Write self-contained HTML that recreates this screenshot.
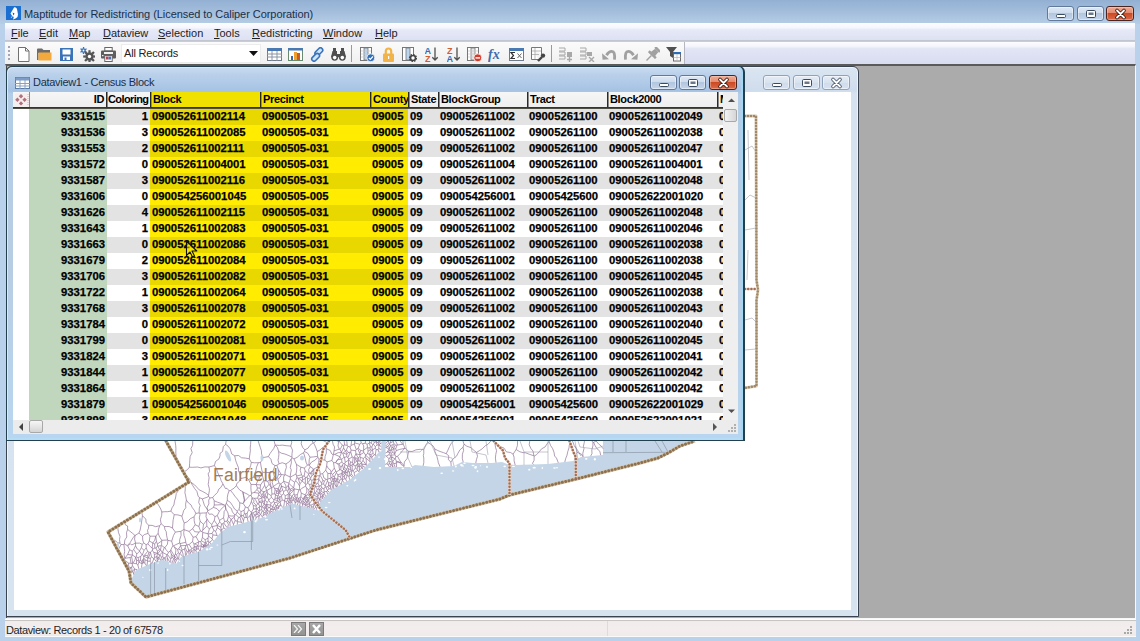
<!DOCTYPE html>
<html><head><meta charset="utf-8">
<style>
*{box-sizing:border-box;margin:0;padding:0}
html,body{width:1140px;height:641px;overflow:hidden}
body{position:relative;background:#b9d1ea;font-family:"Liberation Sans",sans-serif;}
.a{position:absolute}
#title{left:0;top:0;width:1140px;height:24px;background:linear-gradient(#93b0d3,#a5bfdd 55%,#b7cde6)}
#ttext{left:24px;top:8px;font-size:11px;letter-spacing:-0.06px;color:#1b2f4a;white-space:nowrap}
.wb{position:absolute;border:1px solid #61799a;border-radius:3px;background:linear-gradient(#dfe9f6 0%,#cddcee 45%,#b2c6de 50%,#c4d5ea 100%);box-shadow:inset 0 0 0 1px rgba(255,255,255,.45)}
.wb.cl{border-color:#4a2520;background:linear-gradient(#efab95 0%,#e48b70 45%,#cc4a22 50%,#da6a4c 100%);box-shadow:inset 0 0 0 1px rgba(255,220,200,.4)}
.wb.in{border-color:#8ea3bb;background:linear-gradient(#e4ecf6,#d8e3f0 50%,#cfdcec 51%,#d6e2f0);box-shadow:inset 0 0 0 1px rgba(255,255,255,.5)}
.wb svg{position:absolute;left:0;top:0}
#menubar{left:5px;top:23px;width:1130px;height:18px;background:linear-gradient(#fdfdff 0%,#f6f7fd 28%,#e6e9f7 40%,#dde1f3 100%);border-bottom:1px solid #c2c6d0}
.mi{position:absolute;top:27px;font-size:11px;color:#1e1e1e;white-space:nowrap}
#tbrow{left:5px;top:41px;width:1130px;height:24px;background:linear-gradient(#c9ccd6 0,#c9ccd6 1px,#fdfdff 1px,#f4f5fc 22%,#e2e5f5 32%,#d8dcf0 100%)}
#tb{left:5px;top:42px;width:680px;height:22px;background:linear-gradient(#fbfbfb,#f0f0f0);border-right:1px solid #b4b6c2}
#mdi{left:5px;top:64px;width:1131px;height:555px;background:#ababab;border-top:2px solid #5a5a5a;border-left:1px solid #b9d1ea;box-shadow:inset 1px 0 0 #4a4a4a;border-right:1px solid #f8f8f8;border-bottom:1px solid #f8f8f8}
#status{left:5px;top:619px;width:1131px;height:18px;background:linear-gradient(#c8c4c4 0,#c8c4c4 1px,#f1ecec 1px,#f3eded 50%,#f0ebeb 94%,#fafafa 94%);border-top:1px solid #fdfdfd}
.win{position:absolute;border:1px solid #3c4c5c;border-radius:6px 6px 0 0}
.r{position:absolute;left:0;height:16px;width:760px}
.c{position:absolute;top:0;height:16px;font-weight:bold;font-size:11.3px;line-height:14px;padding-left:2px;-webkit-text-stroke:0.25px #000;white-space:nowrap;overflow:hidden;color:#000}
.c.rt{text-align:right;padding-left:0;padding-right:2px}
.h{position:absolute;top:0;height:15px;font-weight:bold;font-size:11px;line-height:15px;padding-left:2px;white-space:nowrap;overflow:hidden;color:#000;letter-spacing:-0.35px;border-left:1px solid #2a2a2a;box-shadow:inset 1px 0 0 #8a8a8a}
.h.rt{text-align:right;padding-right:2px}
</style></head>
<body>
<div id="title" class="a"></div>
<svg class="a" style="left:6px;top:6px" width="15" height="14" viewBox="0 0 15 14"><rect x="-0.5" y="-0.5" width="16" height="15" fill="#8ec4f4"/><rect width="15" height="14" fill="#1a6fd0"/><path d="M8 1.5c1.5-.5 3 .5 3.2 2.5l.8 4.5-.5 2.5-2 1.5-2.5 1 .8-2.5-2-1.5L4.5 7.5 6 5z" fill="#fff"/><path d="M6.5 6.5l2 1-1 2z" fill="#1a4f9a"/><path d="M5 12l1.5-2" stroke="#9fd0ff" stroke-width="1"/></svg>
<div id="ttext" class="a">Maptitude for Redistricting (Licensed to Caliper Corporation)</div>
<div class="wb" style="left:1047px;top:6px;width:27px;height:15px"><svg width="27" height="15"><rect x="8.5" y="7.5" width="9" height="3" rx="1" fill="#fff" stroke="#3a4a5e"/></svg></div>
<div class="wb" style="left:1077px;top:6px;width:27px;height:15px"><svg width="27" height="15"><rect x="8.5" y="3.5" width="9" height="7" rx="1.2" fill="#fff" stroke="#3a4a5e"/><rect x="10.5" y="5.5" width="5" height="2.5" fill="#6a7788"/></svg></div>
<div class="wb cl" style="left:1106px;top:6px;width:28px;height:15px"><svg width="28" height="15"><path d="M10 3.5l7 7M17 3.5l-7 7" stroke="#3a1810" stroke-width="3.6" stroke-linecap="round"/><path d="M10 3.5l7 7M17 3.5l-7 7" stroke="#fff" stroke-width="1.8" stroke-linecap="round"/></svg></div>

<div id="menubar" class="a"></div>
<div class="mi" style="left:11px"><u>F</u>ile</div>
<div class="mi" style="left:39px"><u>E</u>dit</div>
<div class="mi" style="left:69px"><u>M</u>ap</div>
<div class="mi" style="left:103px"><u>D</u>ataview</div>
<div class="mi" style="left:158px"><u>S</u>election</div>
<div class="mi" style="left:214px"><u>T</u>ools</div>
<div class="mi" style="left:252px"><u>R</u>edistricting</div>
<div class="mi" style="left:323px"><u>W</u>indow</div>
<div class="mi" style="left:375px"><u>H</u>elp</div>

<div id="tbrow" class="a"></div>
<div id="tb" class="a"></div>
<div class="a" style="left:121px;top:44px;width:140px;height:19px;background:#fff;border:1px solid #ececec"></div>
<div class="a" style="left:124px;top:47px;font-size:11px;letter-spacing:-0.2px;color:#222;white-space:nowrap">All Records</div>
<svg class="a" style="left:249px;top:51px" width="9" height="5"><path d="M0 0h9L4.5 5z" fill="#111"/></svg>
<!-- toolbar grip -->
<svg class="a" style="left:7px;top:45px" width="4" height="18"><g fill="#a0a8b8"><rect x="1" y="1" width="2" height="2"/><rect x="1" y="5" width="2" height="2"/><rect x="1" y="9" width="2" height="2"/><rect x="1" y="13" width="2" height="2"/></g></svg>
<!-- new -->
<svg class="a" style="left:17px;top:47px" width="13" height="15" viewBox="0 0 13 15"><path d="M1.5 0.5h7l3.5 3.5v10.5h-10.5z" fill="#fff" stroke="#707070"/><path d="M8.5 0.5v3.5h3.5" fill="none" stroke="#707070"/></svg>
<!-- open -->
<svg class="a" style="left:37px;top:48px" width="15" height="13" viewBox="0 0 15 13"><path d="M0 1.5Q0 0.5 1 0.5h4l1.5 1.5H13v3H1.5v7H0z" fill="#6b6b6b"/><rect x="1.5" y="4.5" width="13" height="8" fill="#f3a93c"/></svg>
<!-- save -->
<svg class="a" style="left:60px;top:48px" width="13" height="13" viewBox="0 0 13 13"><rect x="0.75" y="0.75" width="11.5" height="11.5" fill="#3b73b9" stroke="#3b73b9" stroke-width="1.5"/><rect x="2.5" y="1.5" width="8" height="5" fill="#fff"/><rect x="3" y="8.5" width="7" height="3.5" fill="#fff"/><rect x="4.5" y="9.5" width="2" height="2.5" fill="#3b73b9"/></svg>
<!-- gears -->
<svg class="a" style="left:80px;top:47px" width="15" height="15" viewBox="0 0 15 15"><g fill="#3b73b9"><rect x="2.9" y="0" width="1.3" height="1.8" transform="rotate(0 3.5 3.5)"/><rect x="2.9" y="0" width="1.3" height="1.8" transform="rotate(60 3.5 3.5)"/><rect x="2.9" y="0" width="1.3" height="1.8" transform="rotate(120 3.5 3.5)"/><rect x="2.9" y="0" width="1.3" height="1.8" transform="rotate(180 3.5 3.5)"/><rect x="2.9" y="0" width="1.3" height="1.8" transform="rotate(240 3.5 3.5)"/><rect x="2.9" y="0" width="1.3" height="1.8" transform="rotate(300 3.5 3.5)"/><circle cx="3.5" cy="3.5" r="2.2"/></g><circle cx="3.5" cy="3.5" r="0.9" fill="#fff"/><g fill="#555"><rect x="8.4" y="3.2" width="2.2" height="2.6" transform="rotate(0 9.5 9.5)"/><rect x="8.4" y="3.2" width="2.2" height="2.6" transform="rotate(45 9.5 9.5)"/><rect x="8.4" y="3.2" width="2.2" height="2.6" transform="rotate(90 9.5 9.5)"/><rect x="8.4" y="3.2" width="2.2" height="2.6" transform="rotate(135 9.5 9.5)"/><rect x="8.4" y="3.2" width="2.2" height="2.6" transform="rotate(180 9.5 9.5)"/><rect x="8.4" y="3.2" width="2.2" height="2.6" transform="rotate(225 9.5 9.5)"/><rect x="8.4" y="3.2" width="2.2" height="2.6" transform="rotate(270 9.5 9.5)"/><rect x="8.4" y="3.2" width="2.2" height="2.6" transform="rotate(315 9.5 9.5)"/><circle cx="9.5" cy="9.5" r="4.2"/></g><circle cx="9.5" cy="9.5" r="1.7" fill="#fff"/></svg>
<!-- print -->
<svg class="a" style="left:101px;top:47px" width="15" height="15" viewBox="0 0 15 15"><rect x="3.8" y="0.5" width="7.4" height="3.5" fill="#fff" stroke="#666"/><rect x="0" y="3.5" width="15" height="8" rx="1" fill="#5e5e5e"/><rect x="3" y="5" width="9" height="2" fill="#f2f2f2"/><rect x="3.8" y="8.5" width="7.4" height="6" fill="#fff" stroke="#666"/><rect x="5" y="9.5" width="2.5" height="3" fill="#c04050"/><rect x="7.5" y="9.5" width="2.5" height="3" fill="#4a70b0"/><rect x="1" y="8" width="1.5" height="1.2" fill="#dfe"/></svg>
<!-- separator after combobox region -->
<!-- table -->
<svg class="a" style="left:267px;top:48px" width="15" height="13" viewBox="0 0 15 13"><rect x="0.5" y="0.5" width="14" height="12" fill="#fff" stroke="#6f7b88"/><rect x="0" y="0" width="15" height="3" fill="#4a78b0"/><path d="M0 6h15M0 9h15M5 3v10M10 3v10" stroke="#8a96a2"/></svg>
<!-- chart -->
<svg class="a" style="left:288px;top:48px" width="15" height="13" viewBox="0 0 15 13"><rect x="0.5" y="0.5" width="14" height="12" fill="#fff" stroke="#6a8a70"/><rect x="0" y="0" width="15" height="2.5" fill="#4a78b0"/><rect x="3" y="8" width="2" height="4" fill="#3a68a8"/><rect x="6" y="4" width="3" height="8" fill="#f0a030"/><rect x="9" y="5" width="3" height="7" fill="#d05a20"/></svg>
<!-- link -->
<svg class="a" style="left:310px;top:47px" width="15" height="15" viewBox="0 0 15 15"><g fill="#cfe6fa" stroke="#3b73b9" stroke-width="1.6"><rect x="6.6" y="0.2" width="4.5" height="9" rx="2.2" transform="rotate(45 8.8 4.7)"/><rect x="3.4" y="5.8" width="4.5" height="9" rx="2.2" transform="rotate(45 5.6 10.3)"/></g></svg>
<!-- binoculars -->
<svg class="a" style="left:331px;top:48px" width="15" height="13" viewBox="0 0 15 13"><g fill="#4f4f4f"><rect x="2" y="0" width="3" height="4"/><rect x="10" y="0" width="3" height="4"/><path d="M1.5 3h4.5v3h3V3h4.5L15 9H0z"/><circle cx="3.7" cy="9.3" r="3.4"/><circle cx="11.3" cy="9.3" r="3.4"/></g><circle cx="3.7" cy="9.6" r="1.8" fill="#fff"/><circle cx="11.3" cy="9.6" r="1.8" fill="#fff"/></svg>
<div class="a" style="left:351px;top:45px;width:1px;height:17px;background:#9a9a9a"></div>
<!-- col-check -->
<svg class="a" style="left:360px;top:47px" width="15" height="15" viewBox="0 0 15 15"><rect x="0.5" y="0.5" width="11" height="13" fill="#fff" stroke="#777"/><rect x="4" y="1" width="4" height="12" fill="#bcd6f2" stroke="#777" stroke-width="0.8"/><path d="M1 4h10M1 7h10M1 10h10" stroke="#c8c8c8" stroke-width="0.7"/><circle cx="10.8" cy="10.8" r="4" fill="#2f6db5" stroke="#fff" stroke-width="0.8"/><path d="M8.8 10.8l1.5 1.5 2.6-2.8" fill="none" stroke="#fff" stroke-width="1.2"/></svg>
<!-- lock -->
<svg class="a" style="left:383px;top:47px" width="11" height="15" viewBox="0 0 11 15"><path d="M2.8 7V4.2a2.7 2.7 0 0 1 5.4 0V7" fill="none" stroke="#f2b447" stroke-width="2.2"/><rect x="0" y="6.5" width="11" height="8.5" rx="1" fill="#f2b447"/><rect x="5" y="9" width="1.2" height="3" fill="#fff"/></svg>
<!-- col-gear -->
<svg class="a" style="left:402px;top:47px" width="15" height="15" viewBox="0 0 15 15"><rect x="0.5" y="0.5" width="11" height="13" fill="#fff" stroke="#777"/><rect x="4" y="1" width="4" height="12" fill="#bcd6f2" stroke="#777" stroke-width="0.8"/><circle cx="11" cy="11" r="2.5" fill="#fff" stroke="#444" stroke-width="1.6"/><circle cx="11" cy="11" r="3.5" fill="none" stroke="#444" stroke-width="1.2" stroke-dasharray="1.5 1.2"/></svg>
<!-- sort a-z -->
<svg class="a" style="left:425px;top:46px" width="13" height="16" viewBox="0 0 13 16"><text x="-0.5" y="7.5" font-family="Liberation Sans" font-weight="bold" font-size="9" fill="#2f6db5">A</text><text x="0" y="15.5" font-family="Liberation Sans" font-weight="bold" font-size="9" fill="#d0602a">Z</text><path d="M10 1.5v12.5M7.3 11.3L10 14l2.7-2.7" fill="none" stroke="#505050" stroke-width="1.3"/></svg>
<!-- sort z-a -->
<svg class="a" style="left:447px;top:46px" width="13" height="16" viewBox="0 0 13 16"><text x="0" y="7.5" font-family="Liberation Sans" font-weight="bold" font-size="9" fill="#d0602a">Z</text><text x="-0.5" y="15.5" font-family="Liberation Sans" font-weight="bold" font-size="9" fill="#2f6db5">A</text><path d="M10 1.5v12.5M7.3 11.3L10 14l2.7-2.7" fill="none" stroke="#505050" stroke-width="1.3"/></svg>
<!-- col-minus -->
<svg class="a" style="left:467px;top:47px" width="15" height="15" viewBox="0 0 15 15"><rect x="0.5" y="0.5" width="11" height="13" fill="#fff" stroke="#777"/><rect x="4" y="1" width="4" height="12" fill="#e6e6e6" stroke="#777" stroke-width="0.8"/><path d="M1 4h10M1 7h10M1 10h10" stroke="#c8c8c8" stroke-width="0.7"/><circle cx="10.8" cy="10.8" r="4" fill="#d23a2a" stroke="#fff" stroke-width="0.8"/><rect x="8.5" y="10.2" width="4.6" height="1.4" fill="#fff"/></svg>
<!-- fx -->
<svg class="a" style="left:488px;top:46px" width="14" height="16" viewBox="0 0 14 16"><text x="0" y="12.5" font-family="Liberation Serif" font-style="italic" font-weight="bold" font-size="14" fill="#3a6fb2">fx</text></svg>
<!-- sigma window -->
<svg class="a" style="left:509px;top:48px" width="15" height="13" viewBox="0 0 15 13"><rect x="0.5" y="0.5" width="14" height="12" fill="#fff" stroke="#6f7b88"/><rect x="0" y="0" width="15" height="3" fill="#4a78b0"/><path d="M6 4.5H2l2.5 3L2 10.5h4" fill="none" stroke="#333" stroke-width="1.2"/><path d="M8.5 5.5l4 4.5M12.5 5.5l-4 4.5" stroke="#666" stroke-width="1"/></svg>
<!-- edit wrench -->
<svg class="a" style="left:531px;top:47px" width="15" height="15" viewBox="0 0 15 15"><path d="M0.5 0.5h10v7M0.5 0.5v12h7" fill="#fff" stroke="#777"/><path d="M1 4h9M1 7.5h7M4 1v11" stroke="#aaa" stroke-width="0.8"/><path d="M7 14l4-4" stroke="#444" stroke-width="2.4"/><circle cx="12" cy="8.6" r="2.2" fill="#444"/></svg>
<div class="a" style="left:551px;top:45px;width:1px;height:17px;background:#9a9a9a"></div>
<!-- disabled icons -->
<svg class="a" style="left:559px;top:47px" width="15" height="15" viewBox="0 0 15 15"><path d="M0 1h6v3H0M0 5h6v3H0M0 9h6v3H0" fill="none" stroke="#a8a8a8" stroke-width="1"/><rect x="8" y="5" width="5" height="5" fill="#a8a8a8"/><path d="M10.5 10v5M8 12.5h5" stroke="#a8a8a8" stroke-width="1.4"/></svg>
<svg class="a" style="left:580px;top:47px" width="15" height="15" viewBox="0 0 15 15"><path d="M0 1h6v3H0M0 5h6v3H0M0 9h6v3H0" fill="none" stroke="#a8a8a8" stroke-width="1"/><rect x="7" y="5" width="5" height="4" fill="#a8a8a8"/><path d="M9 10l5 5M14 10l-5 5" stroke="#a8a8a8" stroke-width="1.4"/></svg>
<svg class="a" style="left:602px;top:50px" width="15" height="10" viewBox="0 0 15 10"><path d="M4.5 5.2C6 2.5 8 1.4 9.8 1.4 12 1.4 13 3.5 12.5 9.6" fill="none" stroke="#a0a0a0" stroke-width="2.8"/><path d="M0 3.2L0.6 9.8 7 9.2z" fill="#a0a0a0"/></svg>
<svg class="a" style="left:623px;top:50px" width="15" height="10" viewBox="0 0 15 10"><g transform="translate(15 0) scale(-1 1)"><path d="M4.5 5.2C6 2.5 8 1.4 9.8 1.4 12 1.4 13 3.5 12.5 9.6" fill="none" stroke="#a0a0a0" stroke-width="2.8"/><path d="M0 3.2L0.6 9.8 7 9.2z" fill="#a0a0a0"/></g></svg>
<svg class="a" style="left:645px;top:47px" width="15" height="15" viewBox="0 0 15 15"><g transform="rotate(45 7.5 7.5)" fill="#a0a0a0"><rect x="4" y="-1" width="7" height="2.5" rx="0.5"/><path d="M5.2 1.5h4.6l0.6 5.5H4.6z"/><rect x="2.5" y="6.5" width="10" height="2.5" rx="0.5"/><rect x="6.8" y="9" width="1.4" height="7"/></g></svg>
<svg class="a" style="left:666px;top:47px" width="15" height="15" viewBox="0 0 15 15"><path d="M0 0h11L7 5v6L4 9V5z" fill="#505050"/><rect x="7.5" y="5.5" width="7" height="8.5" fill="#fff" stroke="#6a6a6a"/><rect x="7" y="5" width="8" height="2.2" fill="#2f6db5"/><path d="M7.5 10.5h7M11 7v7" stroke="#b8b8b8" stroke-width="0.7"/></svg>


<div id="mdi" class="a"></div>

<!-- Map window -->
<div class="win" style="left:6px;top:66px;width:853px;height:551px;border-color:#3a4450;background:linear-gradient(#dbe6f2,#cfdcec 24px,#d6e2f0 26px,#d8e3f0);box-shadow:inset 1px 1px 0 #eef4fa,inset -1px 0 0 #eef4fa"></div>
<div class="wb in" style="left:763px;top:75px;width:27px;height:15px"><svg width="27" height="15"><rect x="8.5" y="7.5" width="9" height="3" rx="1" fill="#fff" stroke="#3a4a5e"/></svg></div>
<div class="wb in" style="left:793px;top:75px;width:27px;height:15px"><svg width="27" height="15"><rect x="8.5" y="3.5" width="9" height="7" rx="1.2" fill="#fff" stroke="#3a4a5e"/><rect x="10.5" y="5.5" width="5" height="2.5" fill="#6a7788"/></svg></div>
<div class="wb in" style="left:822px;top:75px;width:28px;height:15px"><svg width="28" height="15"><path d="M10 3.5l7 7M17 3.5l-7 7" stroke="#4a5a6e" stroke-width="3.6" stroke-linecap="round"/><path d="M10 3.5l7 7M17 3.5l-7 7" stroke="#fff" stroke-width="1.8" stroke-linecap="round"/></svg></div>
<div class="a" style="left:14px;top:92px;width:837px;height:518px;background:#fff;overflow:hidden">
<svg width="837" height="518" viewBox="14 92 837 518" style="position:absolute;left:0;top:0">
<path d="M603.0 436.0 L603.0 455.0 L581.0 457.0 L573.0 461.0 L548.0 464.0 L515.0 465.0 L507.0 464.0 L502.0 462.0 L492.0 463.0 L473.0 463.0 L462.0 462.0 L454.0 466.0 L434.0 467.0 L415.0 465.0 L411.0 467.0 L400.0 467.0 L385.0 467.0 L386.0 436.0 L382.0 436.0 L381.0 449.6 L373.0 459.0 L363.0 469.0 L350.0 479.5 L331.0 490.0 L319.0 503.6 L319.0 510.4 L300.0 505.6 L292.0 503.6 L282.0 507.5 L271.0 513.0 L261.0 518.0 L251.0 521.0 L228.0 527.0 L220.0 533.0 L212.0 543.0 L200.0 551.0 L181.0 557.0 L176.0 564.0 L162.0 560.0 L150.0 564.0 L136.0 570.0 L131.0 580.0 L130.5 580.0 L131.0 583.0 L146.0 597.0 L290.0 558.0 L376.0 530.0 L500.0 499.0 L509.5 495.0 L576.0 479.0 L640.0 463.0 L658.0 458.0 L668.0 453.0 L680.0 446.0 L695.0 441.0 L697.3 436.0 L603.0 436.0Z" fill="#c4d5e7"/>
<g fill="#fff"><ellipse cx="207.1" cy="549.4" rx="1.3" ry="1.1"/><ellipse cx="369.5" cy="469.0" rx="1.4" ry="0.9"/><ellipse cx="182.7" cy="565.5" rx="1.2" ry="0.8"/><ellipse cx="542.3" cy="467.9" rx="0.6" ry="1.2"/><ellipse cx="464.5" cy="463.2" rx="1.3" ry="0.8"/><ellipse cx="158.1" cy="563.0" rx="1.0" ry="0.6"/><ellipse cx="554.5" cy="468.0" rx="1.4" ry="0.7"/><ellipse cx="167.6" cy="569.9" rx="0.8" ry="1.1"/><ellipse cx="179.5" cy="561.2" rx="0.7" ry="0.8"/><ellipse cx="169.9" cy="563.6" rx="0.8" ry="1.1"/><ellipse cx="329.3" cy="502.6" rx="1.3" ry="0.7"/><ellipse cx="475.9" cy="466.8" rx="1.1" ry="0.8"/><ellipse cx="487.0" cy="466.9" rx="0.9" ry="1.1"/><ellipse cx="347.3" cy="485.7" rx="1.0" ry="0.7"/><ellipse cx="461.4" cy="465.0" rx="1.4" ry="1.1"/><ellipse cx="217.4" cy="545.0" rx="1.0" ry="0.5"/><ellipse cx="265.4" cy="516.6" rx="1.0" ry="1.2"/><ellipse cx="462.5" cy="465.9" rx="1.6" ry="0.6"/><ellipse cx="473.0" cy="465.5" rx="1.5" ry="0.7"/><ellipse cx="534.2" cy="467.7" rx="1.6" ry="0.9"/><ellipse cx="504.7" cy="466.3" rx="1.3" ry="0.9"/><ellipse cx="379.0" cy="457.1" rx="0.8" ry="0.9"/><ellipse cx="281.8" cy="509.0" rx="1.0" ry="0.7"/><ellipse cx="411.2" cy="467.1" rx="0.9" ry="0.9"/><ellipse cx="380.4" cy="450.7" rx="1.2" ry="0.8"/><ellipse cx="513.5" cy="466.4" rx="1.5" ry="0.7"/><ellipse cx="480.5" cy="465.7" rx="0.7" ry="0.5"/><ellipse cx="209.9" cy="549.0" rx="1.2" ry="0.8"/><ellipse cx="322.1" cy="511.0" rx="1.4" ry="1.1"/><ellipse cx="477.5" cy="471.2" rx="0.8" ry="1.0"/><ellipse cx="313.8" cy="514.3" rx="0.7" ry="0.5"/><ellipse cx="294.6" cy="508.4" rx="0.9" ry="0.9"/><ellipse cx="586.2" cy="458.9" rx="1.3" ry="0.8"/><ellipse cx="594.9" cy="459.3" rx="1.0" ry="1.2"/><ellipse cx="150.2" cy="570.1" rx="1.3" ry="1.1"/><ellipse cx="385.0" cy="459.1" rx="0.9" ry="1.2"/><ellipse cx="453.1" cy="470.9" rx="1.2" ry="0.7"/><ellipse cx="475.5" cy="467.5" rx="1.3" ry="1.2"/><ellipse cx="455.9" cy="466.5" rx="0.9" ry="1.1"/><ellipse cx="278.9" cy="509.7" rx="1.1" ry="0.7"/><ellipse cx="244.5" cy="532.2" rx="1.3" ry="1.1"/><ellipse cx="211.4" cy="547.5" rx="1.4" ry="0.7"/><ellipse cx="355.5" cy="479.9" rx="0.8" ry="1.1"/><ellipse cx="397.8" cy="470.1" rx="0.8" ry="1.1"/><ellipse cx="266.5" cy="519.7" rx="1.6" ry="0.8"/><ellipse cx="255.6" cy="521.3" rx="1.1" ry="1.1"/><ellipse cx="557.0" cy="467.7" rx="0.9" ry="0.8"/><ellipse cx="441.7" cy="473.3" rx="1.4" ry="0.7"/><ellipse cx="326.1" cy="507.5" rx="1.4" ry="0.8"/><ellipse cx="402.8" cy="468.3" rx="1.3" ry="0.9"/><ellipse cx="256.6" cy="519.8" rx="1.2" ry="0.9"/><ellipse cx="380.0" cy="468.1" rx="1.3" ry="1.1"/><ellipse cx="354.4" cy="480.7" rx="0.6" ry="1.0"/><ellipse cx="529.3" cy="469.7" rx="1.1" ry="0.9"/><ellipse cx="142.9" cy="577.2" rx="0.7" ry="0.5"/></g>
<path d="M150.6 563.0 L150.6 595.0M154.5 562.0 L154.5 594.0M165.7 568.0 L165.7 591.0M184.0 556.0 L184.0 584.0M198.6 551.7 L198.6 581.0M198.6 565.5 L221.8 565.5 L221.8 529.5M221.8 545.0 L230.4 541.5 L252.7 541.5 L252.7 514.0M251.4 521.0 L251.4 550.0M613.0 441.0 L613.0 452.0M626.0 441.0 L626.0 452.0M655.0 441.0 L662.0 452.0M662.0 441.0 L668.0 452.0M603.0 452.7 L668.0 452.3M575.0 446.0 L581.0 456.0M300.0 505.6 L300.0 520.0M290.0 505.0 L292.0 518.0" fill="none" stroke="#8c98a8" stroke-width="0.7"/>
<path d="M558.3 462.8 556.5 458.1 554.6 456.0 554.0 452.3 552.7 448.7 550.7 445.7 549.0 441.5M533.4 464.4 532.5 463.3 534.1 460.3 534.1 456.2M534.1 456.2 536.7 454.6 539.4 451.6 541.6 448.8 545.0 447.0 547.6 443.1 549.0 441.5M450.9 462.1 451.2 466.1M450.9 462.1 448.3 459.6 448.8 455.8 446.2 453.7M440.0 466.7 438.3 462.6 437.9 460.3 436.9 456.3 434.9 451.4 434.8 449.0M446.2 453.7 443.6 452.7 440.1 451.5 437.8 450.5 434.8 449.0M464.0 444.2 466.8 446.2 471.4 447.8 473.3 450.0 476.6 452.4M464.0 444.2 463.1 447.2M463.1 447.2 463.6 450.4 462.4 454.2 462.3 458.5 463.2 462.1M476.6 452.4 477.5 456.3 476.4 459.7 475.8 463.0M459.7 430.4 457.6 432.8 455.3 437.6 453.1 441.4 451.3 443.4 449.6 446.3 447.9 450.2 446.2 453.7M459.7 430.4 460.6 434.1 462.0 438.1 462.7 440.2 464.0 444.2M450.9 462.1 452.9 459.1 456.5 456.2 458.0 453.2 459.9 449.9 463.1 447.2M515.2 465.0 514.1 460.8 514.1 457.3 513.1 454.2M496.0 462.6 495.4 458.1 495.8 454.3 496.6 450.6 495.6 447.7 494.9 443.5M513.1 454.2 510.6 452.5 506.4 451.9 504.1 448.2 501.7 447.1 497.5 445.7 494.9 443.5M476.6 452.4 479.5 450.6 482.3 448.7 485.4 445.7 487.9 444.4 490.7 441.2 493.5 439.4M494.9 443.5 493.5 439.4M459.7 430.0 459.7 430.4M462.5 430.0 466.0 431.3 469.7 431.2 472.2 432.8 476.8 434.1 480.7 435.9 483.7 436.1 486.6 436.5 490.3 437.3 493.6 438.9M493.5 439.4 493.6 438.9M434.8 449.0 433.0 445.8 430.8 444.4 427.7 442.3M428.5 430.0 427.9 433.2 428.2 436.2 427.1 437.6 427.7 442.3M423.1 465.9 423.8 462.7 423.8 458.0 423.3 455.6 423.8 453.5 423.8 449.7M427.7 442.3 425.7 445.1 425.4 446.0 423.8 449.7M184.2 471.9 183.1 471.5M184.2 471.9 184.3 472.4M161.8 512.0 164.8 511.7 167.7 511.7 170.9 511.1M161.8 512.0 160.8 509.1 159.0 505.9 156.5 502.0M184.3 472.4 184.2 473.5M179.5 487.9 178.2 490.8 176.3 493.4 175.5 498.0 174.5 501.1 173.9 505.0 172.0 507.8 170.9 511.1M574.6 460.2 574.6 458.3 576.3 453.5 577.2 452.4M564.8 462.0 565.7 458.5 567.0 455.2 567.8 451.5 569.0 447.8 569.3 445.2 570.1 442.3 571.2 438.4M571.2 438.4 572.9 442.0 574.3 445.7 576.1 448.4 577.2 452.4M549.0 441.5 550.0 437.5 550.7 433.9 551.9 430.0M571.2 438.4 571.3 434.8 571.2 433.4 571.5 430.0M533.9 455.8 533.0 451.0 531.0 448.7 529.2 444.8 529.7 441.3 526.9 437.6 525.1 433.6 524.9 430.0M533.9 455.8 529.1 454.2 525.6 452.8 523.0 452.6 519.9 451.8 516.1 449.5M516.1 449.5 517.4 445.6 517.6 441.1 517.7 437.5 517.7 434.5 518.8 430.0M534.1 456.2 533.9 455.8M513.1 454.2 516.1 449.5M495.3 430.0 494.4 433.2 494.0 436.5 493.6 438.9M175.9 458.6 176.0 454.1 175.8 453.0 175.9 448.5 175.7 445.2 174.9 440.3 174.9 436.3 174.5 434.3 174.9 430.0M123.9 544.5 121.0 544.6M123.9 544.5 124.4 544.1M124.4 544.1 124.8 540.0 126.8 537.0 126.5 532.6 127.6 529.4M121.0 544.6 120.0 543.2M120.0 543.2 119.5 539.7 120.0 536.4 118.5 532.6 117.9 528.8 118.3 525.6M127.6 529.4 127.6 526.0 125.4 524.8 124.7 521.7M117.9 550.3 119.6 547.3 121.0 544.6M123.3 560.5 124.1 559.9M124.1 559.9 124.7 558.5M124.7 558.5 124.1 554.5 124.7 551.4 124.3 548.4 123.9 544.5M112.1 539.7 113.9 539.8 117.6 542.6 120.0 543.2M130.4 579.5 131.0 577.2 130.7 573.7 132.2 571.2M133.7 574.7 133.6 573.6M132.2 571.2 133.6 573.6M401.6 462.9 396.3 461.2M401.6 462.9 404.0 465.5M403.9 466.1 404.0 465.5M403.9 466.1 401.1 464.5 399.2 462.0 396.4 462.3M396.4 462.3 396.3 461.2M408.6 451.3 412.1 451.5 416.0 449.8 420.2 449.3 423.8 449.7M408.6 451.3 408.0 454.4 407.1 458.6 404.4 461.9 404.0 465.5M403.9 467.0 403.9 466.1M185.0 484.5 185.3 488.7 184.9 492.8 185.5 495.1 186.4 500.1M170.9 511.1 174.2 514.7M174.2 514.7 177.9 514.9 181.9 516.1M181.9 516.1 182.8 513.8 183.6 510.7 185.8 507.7 185.6 504.1 186.4 500.1M590.7 456.1 592.0 453.4 591.8 450.0 592.9 445.9 592.9 442.3M583.1 456.8 583.0 456.7M583.0 456.7 582.8 453.4 584.0 448.5 583.4 446.3 584.3 442.4 584.6 437.4 585.1 434.5M592.9 442.3 589.9 438.3 588.0 436.3 585.1 434.5M577.2 452.4 581.4 454.1 583.0 456.7M582.5 430.0 585.1 434.5M161.1 523.7 164.4 526.5M161.8 512.0 161.7 515.3 160.4 519.7 161.1 523.7M174.2 514.7 173.3 519.4 173.1 519.9 172.8 524.2 172.4 528.0M164.4 526.5 166.7 526.5 169.1 526.5 172.4 528.0M127.6 529.4 130.1 531.4 132.4 533.2 134.9 535.4M124.4 544.1 127.3 545.5M127.3 545.5 130.2 542.5 130.8 541.4 133.2 537.6 134.9 535.4M129.7 549.8 127.6 554.5M129.7 549.8 127.7 545.9M124.7 558.5 124.9 558.3M127.3 545.5 127.7 545.9M124.9 558.3 127.6 554.5M132.2 551.0 129.7 549.8M132.4 555.0 132.4 555.1M132.2 551.0 132.4 555.0M127.6 554.5 132.4 555.1M396.4 463.2 393.7 463.6M396.4 463.2 396.5 467.0M395.1 467.0 393.7 463.6M396.4 462.3 396.4 463.2M593.6 442.3 596.2 441.0M593.6 442.3 594.9 445.3 597.0 448.7 599.8 451.2 600.7 455.2M596.2 441.0 598.5 443.9 601.1 445.9 603.0 448.7M592.9 442.3 593.6 442.3M596.2 441.0 597.4 440.0M597.4 440.0 603.0 440.5M189.4 467.2 192.8 467.3 197.6 467.0 200.9 467.9 204.9 466.9 208.9 467.0M184.2 471.9 187.6 469.5 189.4 467.2M184.3 472.4 186.4 475.5 189.5 478.9 190.7 482.1M190.7 482.1 194.5 484.8 196.7 487.1 199.2 489.9 202.1 491.2 206.1 493.4 208.5 495.4M208.9 467.0 209.6 471.4 208.1 473.9 209.1 477.7 208.6 481.4 208.2 484.4 209.3 488.5 209.4 490.5 208.5 495.4M208.9 467.0 214.4 465.6M225.6 444.3 223.3 446.6 222.6 451.4 220.0 453.4 220.0 455.8 219.0 458.8 215.5 461.5 214.4 465.6M225.6 444.3 226.3 439.7 226.3 437.2 226.3 433.3 227.0 430.0M189.4 467.2 189.6 463.7 189.9 459.2 190.1 456.6 192.2 452.6 190.9 448.6 192.6 445.4 192.8 440.7 194.6 437.4 193.4 434.0 194.3 430.0M124.9 558.3 130.1 557.5M132.4 555.1 131.6 556.8M130.1 557.5 131.6 556.8M128.6 563.1 131.0 563.3M124.1 559.9 128.6 563.1M130.1 557.5 131.0 563.3M135.6 557.2 135.0 559.9 133.0 563.1M135.6 557.2 132.4 555.0M131.6 556.8 132.3 560.2 132.5 563.4M133.0 563.1 132.5 563.4M132.0 571.0 131.7 567.1M132.2 571.2 132.0 571.0M131.7 567.1 132.4 565.5M132.2 571.2 134.7 569.1M132.4 565.5 134.7 569.1M131.0 563.3 132.3 563.7M132.5 563.4 132.3 563.7M132.2 571.2 132.2 571.2M133.6 573.6 134.7 569.1M134.7 569.1 134.7 569.1M128.6 566.9 131.1 567.7M128.6 566.9 128.2 569.6M131.1 567.7 128.9 570.9M132.4 565.5 132.3 563.7M131.7 567.1 131.1 567.7M128.6 563.1 128.6 566.9M132.0 571.0 129.1 571.8M164.4 526.5 165.0 529.7 166.2 531.5 166.7 535.9 167.6 540.0M175.4 532.1 173.5 535.4 172.7 538.0 171.7 541.2M172.4 528.0 175.4 532.1M171.7 541.2 167.9 540.3M167.6 540.0 167.9 540.3M127.7 545.9 130.2 543.8 131.9 544.9 135.5 543.1M134.9 535.4 135.0 535.5M135.0 535.5 134.6 539.0 135.5 543.1M132.2 551.0 133.7 549.6M135.5 543.1 135.5 543.2M135.5 543.2 135.5 545.7M133.7 549.6 135.5 545.7M152.0 563.3 153.9 558.6M151.5 563.5 150.2 561.2M150.2 561.2 150.4 558.3M153.9 558.6 151.5 556.9M151.5 556.9 150.4 558.3M156.5 561.8 154.1 558.6M154.1 558.6 153.9 558.6M408.6 451.3 405.0 448.2M404.7 430.0 404.6 433.4 403.9 436.1 402.9 441.0 403.3 444.5M405.0 448.2 403.3 444.5M401.6 462.9 399.6 460.2 397.5 456.3M397.5 456.3 400.4 453.3 402.5 450.6 404.9 448.3M405.0 448.2 404.9 448.3M184.4 549.2 185.3 551.9 185.4 555.6M186.0 555.4 187.2 552.1M184.4 549.2 185.2 547.6M185.2 547.6 187.2 552.1M195.8 513.4 194.1 516.8M186.4 500.1 188.5 503.0 191.0 504.8 192.0 507.2 194.5 510.6 195.8 513.4M181.9 516.1 182.6 518.9 184.2 523.0M194.1 516.8 190.3 518.7 187.3 521.8 184.2 523.0M175.4 532.1 180.9 531.3M180.9 531.3 184.0 529.4M184.2 523.0 183.9 526.2 184.0 529.4M598.5 436.6 599.3 432.9 602.6 430.0M598.5 436.6 599.2 434.3 597.7 430.0M607.9 436.0 606.4 433.9 607.5 430.0M597.4 440.0 598.5 436.6M647.5 436.0 647.3 432.2 647.4 430.0M195.8 513.4 199.1 512.9M190.7 482.1 192.8 485.7 194.7 488.6 196.9 491.4 198.1 496.1 199.5 497.7M199.1 512.9 199.3 508.2 200.2 505.4 198.7 502.6 199.5 497.7M208.5 495.4 208.7 496.5M208.7 496.5 206.1 497.6 202.3 498.9M199.5 497.7 202.3 498.9M225.6 444.3 228.0 446.1 230.2 448.8 231.7 453.9 234.7 455.8M234.7 455.8 238.5 455.5 241.6 457.8 245.5 458.1 249.3 458.8M252.3 430.0 251.7 432.9 252.3 436.1 250.9 440.0 250.6 444.4 250.2 448.1 250.4 450.4 249.6 456.0 249.3 458.8M164.3 547.5 161.6 545.4M164.3 547.5 162.5 552.3M161.3 545.7 161.6 545.4M161.3 545.7 160.5 549.7M160.5 549.7 160.6 549.9M160.6 549.9 162.1 552.3M162.1 552.3 162.5 552.3M167.6 540.0 161.8 540.3M167.9 540.3 167.4 544.4 165.0 547.4M161.8 540.3 161.7 540.9M161.7 540.9 161.6 545.4M165.0 547.4 164.3 547.5M167.5 554.5 167.1 554.8M162.7 552.5 167.1 554.8M168.4 552.3 167.5 554.5M162.7 552.5 162.5 552.3M168.4 552.3 165.8 549.4 165.0 547.4M159.6 549.5 160.5 549.7M157.8 546.1 159.6 549.5M157.8 546.1 161.3 545.7M160.0 554.8 161.4 557.2M160.0 554.8 162.1 552.3M162.7 552.5 162.8 556.9M161.4 557.2 162.8 556.9M167.3 557.8 169.8 562.2M167.3 557.8 167.2 561.5M166.9 555.4 167.3 557.8M166.9 555.4 167.1 554.8M167.5 554.5 170.6 558.9M170.6 558.9 170.8 562.5M165.2 557.6 166.9 555.4M165.2 557.6 165.4 561.0M157.8 546.1 157.5 546.0M161.7 540.9 157.4 544.0M157.5 546.0 157.4 544.0M159.4 554.9 157.9 554.0M160.0 554.8 159.4 554.9M160.6 549.9 157.8 553.8M157.8 553.8 157.9 554.0M161.4 557.2 160.9 560.2M160.9 560.2 159.1 558.6M159.4 554.9 159.1 557.6M159.1 558.6 159.1 557.6M148.4 558.0 147.9 558.2M148.4 558.0 150.5 552.5M147.9 558.2 147.8 555.8M147.8 555.8 149.0 552.2M149.0 552.2 150.5 552.4M150.5 552.5 150.5 552.4M150.4 558.3 148.4 558.0M151.5 556.9 150.5 552.5M144.5 555.3 147.8 555.8M147.6 551.4 144.5 555.3M147.6 551.4 149.0 552.2M147.6 561.2 150.2 561.2M147.6 561.2 147.0 565.3M137.0 569.6 134.7 569.1M147.9 558.2 147.8 558.2M144.5 555.3 143.7 556.0M147.8 558.2 143.7 556.0M147.6 561.2 147.5 560.7M147.8 558.2 147.5 560.7M135.6 557.2 135.7 557.2M135.7 557.2 136.6 560.0M133.0 563.1 136.5 563.8M136.6 560.0 136.5 563.8M138.8 568.8 137.9 565.0M136.5 563.8 137.9 565.0M142.0 563.7 141.5 567.6M142.0 563.7 142.0 563.7M142.0 563.7 138.9 562.2M137.9 565.0 138.9 562.2M388.8 460.8 386.9 463.8M388.8 460.8 389.8 461.5M389.8 461.5 389.6 464.0M389.6 464.0 387.8 464.3M386.9 463.8 387.8 464.3M390.6 467.0 390.9 464.6M389.6 467.0 387.8 464.3M390.9 464.6 389.6 464.0M393.0 467.0 392.0 462.9M393.0 467.0 391.1 464.3M391.1 464.3 392.0 462.9M393.7 463.6 392.7 461.6M392.7 461.6 392.3 462.0M392.3 462.0 392.0 462.9M390.9 464.6 391.1 464.3M392.3 462.0 389.8 461.5M396.3 461.2 395.3 458.4M397.5 456.3 395.9 456.7M395.3 458.4 395.9 456.7M394.4 430.9 392.8 434.3 390.2 436.3M394.4 430.9 390.8 431.2 387.9 431.8M390.2 436.3 388.2 434.4M388.2 434.4 387.9 433.0M387.9 431.8 387.9 433.0M387.6 430.0 387.9 431.8M395.6 430.0 394.4 430.9M181.9 550.3 181.5 550.6M181.9 550.3 183.0 553.9 183.3 556.3M181.5 550.6 180.1 553.4M182.6 556.5 180.1 553.4M182.2 550.0 181.9 550.3M182.2 550.0 184.4 549.2M179.1 559.6 178.6 559.1M180.1 553.4 179.3 553.6M179.3 553.6 178.6 559.1M175.1 563.7 176.4 559.9M173.7 563.3 174.9 559.4M174.9 559.4 176.4 559.9M173.5 559.1 172.1 562.9M173.5 559.1 174.4 558.9M174.9 559.4 174.4 558.9M178.6 559.1 177.9 558.8M177.9 558.8 177.3 559.1M177.3 559.1 176.4 559.9M202.6 547.0 203.7 545.0M202.6 547.0 203.0 547.2M203.0 547.2 203.9 545.0M203.7 545.0 203.9 545.0M201.2 546.3 201.2 546.0M201.2 543.7 201.2 546.0M201.2 546.3 202.6 547.0M201.2 543.7 203.7 545.0M203.8 548.5 203.4 547.7M203.4 547.7 203.0 547.2M201.2 546.3 200.2 550.9M184.0 529.4 184.3 529.7M185.8 542.3 185.1 538.5 184.0 535.6 183.7 532.4 184.3 529.7M180.9 531.3 181.1 535.4 179.7 539.6 179.6 543.0M185.8 542.3 180.0 543.6M179.6 543.0 180.0 543.6M172.9 545.5 173.6 545.9M171.7 541.2 172.9 545.5M179.6 543.0 175.7 544.7 173.6 545.9M185.8 542.3 186.5 544.8M186.0 545.5 186.5 544.8M186.0 545.5 180.6 545.7M180.0 543.6 180.6 545.7M181.5 550.6 178.6 549.0M182.2 550.0 180.6 545.8M180.6 545.8 178.6 549.0M185.2 547.6 186.0 545.5M180.6 545.8 180.6 545.7M258.4 462.7 254.5 462.8 251.3 462.4M251.3 462.4 250.7 465.5 249.1 469.8 247.2 472.6 246.1 477.3M253.7 477.2 254.8 473.4 256.1 469.8 256.5 467.2 258.4 462.7M253.7 477.2 248.5 479.5M248.5 479.5 246.1 477.3M234.7 455.8 235.6 460.3 236.5 462.9 238.5 467.8 238.5 471.0 240.0 473.9 240.8 478.5M249.3 458.8 251.3 462.4M246.1 477.3 240.8 478.5M310.0 457.2 309.2 459.8 309.0 465.0M310.0 457.2 307.7 453.2 304.4 451.5M304.4 451.5 303.5 452.8M303.5 452.8 304.3 455.0 305.3 458.7 306.0 462.2 307.4 465.1M307.4 465.1 309.0 465.0M317.6 456.3 318.0 457.3M317.6 456.3 317.2 451.5M317.2 451.5 319.8 450.1 323.1 447.1 325.8 446.0M326.3 448.7 325.8 446.0M324.8 460.2 319.0 459.0M324.8 460.2 325.1 456.3 326.3 453.2 326.3 448.7M318.0 457.3 319.0 459.0M309.0 465.0 309.3 465.2M317.6 456.3 313.7 456.9 310.0 457.2M318.0 457.3 315.0 460.1 311.5 462.1 309.3 465.2M333.1 480.3 334.3 478.5M333.1 480.3 332.2 478.8M332.2 478.8 334.3 478.5M331.6 477.5 332.2 478.8M331.6 477.5 330.9 477.5M333.1 480.9 333.1 480.3M330.9 477.5 330.3 478.2M333.1 480.9 331.4 481.6M330.3 478.2 331.4 481.6M331.6 477.5 333.2 476.6M332.7 474.4 333.2 476.6M330.9 477.5 330.6 473.5M332.7 474.4 330.9 473.0M330.6 473.5 330.9 473.0M163.6 560.4 164.3 557.9M162.0 560.0 163.8 557.8M164.3 557.9 163.8 557.8M165.2 557.6 164.3 557.9M162.8 556.9 163.8 557.8M160.9 560.2 161.0 560.3M154.7 544.0 156.4 541.4M156.4 541.4 155.8 536.2M154.7 544.0 152.8 542.9M152.8 542.9 154.7 540.3 155.8 536.2M133.7 549.6 136.8 554.0M135.7 557.2 136.1 556.8M136.8 554.0 136.1 556.8M159.6 549.5 157.4 551.1M157.5 546.0 156.0 548.1M157.4 551.1 156.0 548.1M157.4 544.0 156.4 541.4M154.7 544.0 154.8 548.1M156.0 548.1 154.8 548.1M159.1 557.6 158.0 557.7M157.9 554.0 156.8 556.0M156.8 556.0 158.0 557.7M146.3 565.6 144.8 563.0M147.5 560.7 145.0 559.9M144.8 563.0 145.0 559.9M143.7 556.0 143.8 557.8M143.7 556.0 143.7 556.0M145.0 559.9 143.8 557.8M395.9 456.7 395.0 454.8M404.9 448.3 402.1 448.9 399.3 449.5 396.2 450.7M396.2 450.7 394.8 453.8M395.0 454.8 394.8 453.8M387.4 452.0 388.9 448.9M387.6 452.0 387.4 452.0M387.6 452.0 390.1 450.0M390.1 450.0 389.4 448.8M388.9 448.9 389.4 448.8M383.1 430.0 383.6 434.4M381.6 430.0 381.4 435.0M381.4 435.0 383.2 435.3M383.6 434.4 383.2 435.3M387.9 433.0 383.6 434.4M387.4 435.8 388.2 434.4M387.4 435.8 386.0 437.1M383.4 436.0 383.2 435.3M379.3 432.2 380.8 435.4M379.3 432.2 377.8 433.2M377.8 433.2 376.6 435.3M380.7 435.5 380.8 435.4M380.7 435.5 377.3 436.4M377.3 436.4 376.5 435.6M376.6 435.3 376.5 435.6M381.4 435.0 380.8 435.4M380.1 430.0 379.3 432.2M377.1 430.0 377.8 433.2M374.7 430.0 375.5 432.6M375.5 432.6 376.6 435.3M375.2 436.6 376.5 435.6M375.5 432.6 372.8 433.9M375.2 436.6 374.3 436.8M374.3 436.8 372.8 433.9M332.7 474.4 335.8 471.1M331.1 472.5 330.9 473.0M331.1 472.5 334.3 468.1M334.3 468.1 335.8 471.1M316.7 509.8 316.6 508.4M316.6 508.4 319.0 504.8M168.4 552.3 170.1 551.1M172.9 545.5 170.8 549.9M170.1 551.1 170.8 549.9M178.4 552.8 176.5 554.8M178.4 552.8 177.6 549.4M177.6 549.4 174.4 547.1M174.4 547.1 175.9 549.9 175.4 554.4M176.5 554.8 175.4 554.4M179.3 553.6 178.4 552.8M177.9 558.8 176.5 554.8M178.6 549.0 177.6 549.4M173.6 545.9 174.4 547.1M170.8 549.9 172.8 553.3 174.5 555.4M174.5 555.4 175.4 554.4M174.5 555.7 174.5 558.3M174.5 555.7 175.7 557.7M175.7 557.7 174.5 558.3M174.5 555.5 174.5 555.4M177.3 559.1 175.7 557.7M174.5 555.5 174.5 555.7M174.4 558.9 174.5 558.3M208.1 545.6 207.7 545.3M206.2 546.9 206.1 546.7M207.7 545.3 206.4 545.4M206.1 546.7 206.4 545.4M206.1 546.7 205.6 545.6M206.4 545.4 205.7 545.1M205.6 545.6 205.7 545.1M186.9 544.9 186.5 544.8M189.1 531.4 184.3 529.7M189.1 531.4 190.8 533.7 193.1 537.2M186.9 544.9 189.1 544.5M193.1 537.2 192.6 541.5M189.1 544.5 192.6 541.5M194.1 516.8 194.2 520.8 195.1 524.7M189.1 531.4 192.7 528.7M192.7 528.7 195.1 524.7M190.1 554.1 190.4 552.7M189.0 554.5 188.6 550.6M190.4 552.7 189.1 550.1M188.6 550.6 188.7 550.0M188.7 550.0 189.1 550.1M191.4 551.2 190.4 552.7M191.4 551.2 191.9 551.7M192.6 553.3 191.9 551.7M187.2 552.1 188.6 550.6M191.1 549.9 191.4 551.2M191.1 549.9 189.1 550.1M186.9 544.9 188.7 550.0M191.1 549.9 191.7 548.4M191.7 548.4 189.1 544.5M208.7 496.5 210.0 498.0M214.4 465.6 216.5 468.6 217.5 472.1 218.9 475.1 220.4 478.2 221.1 480.6 223.0 484.0M223.0 484.0 220.5 487.8 218.8 489.1 217.5 492.4 214.5 495.4 212.7 497.5M210.0 498.0 212.7 497.5M202.3 498.9 203.1 501.1 204.4 505.3 206.3 508.0 207.6 510.2M210.0 498.0 208.7 500.0 208.9 503.9 207.1 507.3 207.6 510.2M229.8 523.1 230.2 526.4M229.8 523.1 227.4 520.3M227.4 520.3 226.7 521.2M226.7 521.2 228.4 524.3 227.8 527.1M258.4 462.7 260.5 462.5M255.5 430.0 255.7 433.0 256.9 435.7 257.7 439.7 259.0 443.5 260.3 447.5 261.4 450.7 261.6 454.2 263.1 457.6M263.1 457.6 260.5 462.5M253.7 477.2 259.7 476.7M262.3 475.1 259.7 476.7M262.3 475.1 262.7 472.3M262.7 472.3 262.0 471.0 261.0 465.9 260.5 462.5M299.9 438.1 301.5 441.5 301.2 443.8 302.7 447.5 304.9 449.9M299.9 438.1 301.8 435.1 305.0 435.4 308.4 432.5M304.9 449.9 308.1 448.1 309.9 445.4 313.0 442.9M308.4 432.5 309.3 435.8 312.1 440.0 313.0 442.9M317.2 451.5 316.0 448.1 314.6 444.9 313.7 443.1M313.7 443.1 313.0 442.9M304.4 451.5 304.9 449.9M320.7 501.7 319.4 499.0M321.9 500.3 319.7 498.6M319.7 498.6 319.5 498.8M319.4 499.0 319.5 498.8M319.0 504.6 318.3 503.3M319.4 499.0 318.3 503.3M315.8 507.2 314.2 503.7M316.6 508.4 315.8 507.2M318.3 503.3 317.5 503.1M317.5 503.1 314.2 503.6M314.2 503.7 314.2 503.6M308.6 473.9 305.1 470.9M304.4 468.1 305.1 470.9M307.4 465.1 304.4 468.1M309.3 465.2 310.2 466.7M308.6 473.9 309.2 473.2M309.2 473.2 308.6 469.7 310.2 466.7M332.0 484.3 333.0 488.9M332.0 484.3 333.5 483.2M333.5 483.2 333.7 488.5M330.6 473.5 327.8 473.4M330.3 478.2 327.8 479.1M327.8 479.1 327.8 473.4M326.7 465.6 328.4 468.6 330.6 470.1 331.1 472.5M326.7 465.6 325.7 470.2M327.8 473.4 325.7 470.2M331.4 483.9 330.5 485.3M331.4 483.9 331.0 483.0M331.0 483.0 328.5 482.7M330.5 485.3 328.7 485.1M328.5 482.7 328.6 485.0M328.7 485.1 328.6 485.0M330.7 487.7 331.2 489.2M330.7 487.7 330.5 485.3M331.2 489.2 331.7 489.6M332.0 484.3 331.4 483.9M333.8 482.7 333.5 483.2M333.1 480.9 333.7 481.9M333.7 481.9 333.9 482.3M333.9 482.3 333.8 482.7M331.4 481.6 331.0 483.0M330.7 487.7 328.7 485.1M328.0 486.6 328.6 485.0M328.0 486.6 328.8 488.7M331.2 489.2 328.8 488.7M152.8 542.9 152.8 543.0M154.8 548.1 152.6 549.2M152.6 549.2 152.2 548.1M152.2 548.1 152.8 543.0M141.5 511.3 142.5 515.8M135.0 535.5 138.9 533.1M142.5 515.8 142.1 518.1 141.3 524.2 140.7 527.1 140.1 530.2 138.9 533.1M140.8 556.4 138.0 557.6M140.8 556.4 140.3 560.4M138.0 557.6 139.1 561.3M140.3 560.4 139.1 561.3M139.1 561.3 139.1 561.3M136.1 556.8 138.0 557.6M136.6 560.0 139.1 561.3M141.5 561.2 140.3 560.4M141.5 561.2 142.0 563.7M138.9 562.2 139.1 561.3M142.4 554.8 141.9 554.7M142.4 554.8 144.1 550.3M141.9 554.7 139.6 551.2M144.1 550.3 141.3 547.8M141.3 547.8 139.6 550.8M139.6 550.8 139.6 551.2M147.6 551.4 146.2 547.8M146.2 547.8 144.1 550.3M143.7 556.0 142.4 554.8M140.8 556.4 141.9 554.7M136.8 554.0 139.6 551.2M135.5 543.2 139.6 543.1 142.3 544.3M135.5 545.7 137.3 549.1 139.6 550.8M142.3 544.3 141.3 547.8M157.7 553.4 154.4 554.6M157.7 553.4 157.6 553.3M157.6 553.3 153.7 552.3M154.4 554.6 153.7 552.3M157.8 553.8 157.7 553.4M156.4 556.6 156.8 556.0M154.5 557.8 156.4 556.6M154.5 557.8 154.4 554.6M157.4 551.1 157.6 553.3M152.3 550.2 152.6 549.2M152.3 550.2 153.7 552.3M150.5 552.4 152.3 550.2M154.1 558.6 154.5 557.8M156.8 557.4 157.8 558.8M156.8 557.4 157.3 561.6M157.8 558.8 158.1 559.5M157.4 561.5 158.1 559.5M156.4 556.6 156.8 557.4M158.0 557.7 157.8 558.8M159.1 558.6 158.1 559.5M142.7 563.2 143.5 562.8M142.7 563.2 142.9 559.6M143.5 562.8 143.3 559.2M142.9 559.6 143.3 559.2M142.0 563.7 142.7 563.2M144.8 563.0 143.5 562.8M141.5 561.2 142.9 559.6M143.8 557.8 143.3 559.2M389.8 452.5 387.6 452.0M389.8 452.5 390.0 452.2M390.1 450.0 390.3 450.3M390.0 452.2 390.3 450.3M390.8 455.8 390.9 455.7M391.1 455.2 390.9 455.7M389.8 452.5 389.0 454.7M389.0 454.7 390.8 455.8M391.1 455.2 391.0 453.4M390.0 452.2 391.0 453.4M391.1 455.2 395.0 454.8M394.8 453.8 394.6 453.5M394.6 453.5 392.4 452.4M391.0 453.4 392.4 452.4M388.8 458.6 386.3 456.0M389.0 454.7 386.3 456.0M388.8 458.6 389.6 458.3M390.8 455.8 390.6 456.7M389.6 458.3 390.6 456.7M385.7 447.3 388.9 448.9M385.7 447.3 388.0 446.3M389.4 448.8 389.6 448.0M388.0 446.3 389.6 448.0M387.4 435.8 387.3 440.8M385.9 440.3 387.3 440.8M385.7 446.0 388.9 442.8M388.9 442.8 388.6 441.7M388.6 441.7 387.6 441.2M385.8 443.6 387.6 441.2M376.1 449.6 378.1 449.6M376.1 449.6 375.3 455.1M375.3 455.1 375.7 455.8M378.1 449.6 378.9 452.1M386.3 456.0 385.4 455.6M386.9 463.8 385.1 464.4M388.8 458.6 388.8 460.8M387.4 452.0 385.4 453.1M372.8 433.9 372.4 433.3M372.0 430.0 372.4 433.3M359.8 453.5 360.7 450.4M359.8 453.5 357.7 448.6M360.7 450.4 358.2 448.1M357.7 448.6 358.2 448.1M371.0 430.0 367.9 434.8M367.9 434.8 365.4 430.0M360.6 435.9 359.3 433.7 358.9 430.0M356.8 430.0 355.7 433.5 354.9 437.8 354.7 440.9M360.6 435.9 360.6 439.7M360.6 439.7 354.7 440.9M171.4 554.1 173.0 556.3M171.4 554.1 171.1 558.4M173.0 556.3 172.7 557.2M171.1 558.4 172.7 557.2M170.1 551.1 171.4 554.1M174.5 555.5 173.0 556.3M170.6 558.9 171.1 558.4M173.5 559.1 172.7 557.2M204.0 545.0 204.4 544.5M204.0 545.0 204.1 545.6M204.4 544.5 205.2 546.3M204.1 545.6 204.9 547.1M204.9 547.1 205.2 546.3M203.9 545.0 204.0 545.0M203.4 547.7 204.1 545.6M205.1 543.3 205.7 545.1M205.1 543.3 204.4 544.5M205.6 545.6 205.2 546.3M205.0 547.7 204.9 547.1M198.7 541.9 194.9 543.8M198.7 541.9 197.9 545.8M194.9 543.8 197.9 545.8M208.1 534.0 208.0 533.7M208.0 533.7 209.4 529.0M212.1 533.4 208.1 534.0M209.4 529.0 211.8 526.3M211.8 526.3 212.1 526.6M212.1 533.4 213.8 530.3M212.1 526.6 213.8 530.3M199.1 512.9 199.7 513.2M199.7 513.2 200.0 514.6 199.3 517.9 200.2 521.2M195.1 524.7 198.9 526.5M200.2 521.2 198.9 526.5M212.1 533.4 212.9 534.9M212.9 534.9 212.0 538.8M208.1 534.0 208.5 536.0M208.5 536.0 212.0 538.8M213.7 540.8 212.6 539.9M210.7 543.8 209.7 542.1M212.6 539.9 209.7 542.1M208.5 545.3 208.8 542.1M208.8 542.1 209.7 542.1M240.8 478.5 239.6 481.1 236.8 483.5 236.4 485.6M236.4 485.6 234.1 488.1 230.5 490.5M223.0 484.0 225.4 488.5 227.0 488.3 229.1 490.8M230.5 490.5 229.1 490.8M206.3 512.9 203.3 513.0 199.7 513.2M206.3 512.9 207.5 511.5M207.6 510.2 207.7 510.8M207.5 511.5 207.7 510.8M211.7 524.5 208.7 521.5 207.0 518.9M206.3 512.9 206.0 516.9 207.0 518.9M211.7 524.5 214.3 520.4M214.3 520.4 215.0 516.6M207.5 511.5 209.3 514.3 212.1 514.0 215.0 516.6M223.8 528.1 222.8 523.7M225.5 528.8 223.8 528.1M227.1 527.7 223.8 523.0M223.8 523.0 222.8 523.7M226.7 521.2 224.5 521.5M223.8 523.0 224.5 521.5M273.4 486.6 271.7 487.7M273.4 486.6 274.3 488.2M274.6 493.9 275.0 489.7M274.6 493.9 272.0 494.0M272.0 494.0 271.7 491.8 271.7 487.7M274.3 488.2 275.0 489.7M275.4 494.9 274.6 493.9M276.4 493.2 276.6 490.8M275.4 494.9 276.4 493.2M275.0 489.7 276.6 490.8M263.1 457.6 268.4 456.6M273.3 430.0 273.9 434.7 274.8 437.7 274.3 441.7 275.2 445.0M268.4 456.6 270.1 453.4 271.7 451.2 273.7 448.6 275.2 445.0M290.7 446.1 292.5 450.1 292.0 453.8 291.9 457.1M291.9 457.1 288.9 455.6 284.9 454.0 281.4 453.2 278.6 451.4M290.7 446.1 286.1 445.7 282.5 445.1 279.5 445.4 275.3 445.1M278.6 451.4 277.5 447.7 275.3 445.1M290.9 430.0 292.3 434.9M292.3 434.9 291.4 438.7 291.7 442.7 290.7 446.1M275.2 445.0 275.3 445.1M316.6 440.0 317.3 435.9 316.2 432.9 316.2 430.0M316.6 440.0 320.4 437.7M320.4 437.7 322.3 432.9 322.1 430.0M313.7 443.1 316.6 440.0M308.4 432.5 308.5 430.0M325.8 446.0 326.8 442.4M326.8 442.4 323.1 440.6 320.4 437.7M332.6 438.3 332.5 438.6M326.8 442.4 329.1 439.4 332.5 438.6M333.1 430.0 333.8 433.2 332.4 435.0 332.6 438.3M292.3 434.9 294.7 435.5 296.9 437.4 299.9 438.1M323.0 499.1 322.5 498.2M319.7 498.6 320.2 497.5M322.5 498.2 320.2 497.5M315.8 507.2 313.7 509.1M314.2 503.7 313.3 507.0M313.0 508.9 313.3 507.0M314.2 503.6 314.2 503.5M313.3 507.0 311.3 506.8M311.3 506.8 311.0 505.1M314.2 503.5 311.0 505.1M316.9 500.1 313.1 498.9M317.5 503.1 316.9 500.1M314.2 503.5 313.1 498.9M152.8 543.0 149.3 541.0M152.2 548.1 149.5 545.8 147.9 543.8M149.3 541.0 147.9 543.8M138.9 533.1 142.6 536.2M142.3 544.3 143.7 542.9M142.6 536.2 142.7 540.0 143.7 542.9M146.2 547.8 146.1 544.7M143.7 542.9 146.1 544.7M146.1 544.7 147.9 543.8M148.8 525.3 148.4 528.6 147.5 530.3 148.1 533.4M148.8 525.3 152.2 525.4 155.7 526.7 159.7 525.7M155.8 536.2 150.0 536.2M155.8 536.2 158.1 533.3M150.0 536.2 148.1 533.4M159.7 525.7 158.5 529.2 158.1 533.3M142.6 536.2 144.5 534.5 148.1 533.4M142.5 515.8 145.8 519.1 146.1 522.7 148.8 525.3M161.1 523.7 159.7 525.7M155.8 536.2 155.8 536.2M149.3 541.0 150.0 536.2M161.8 540.3 159.7 537.1 158.1 533.3M391.1 457.4 392.3 460.7M391.1 457.4 393.2 457.8M394.9 458.8 393.2 457.8M394.9 458.8 392.8 461.3M392.8 461.3 392.3 460.7M389.6 458.3 392.3 460.7M390.6 456.7 391.1 457.4M390.9 455.7 393.2 457.8M395.3 458.4 394.9 458.8M392.7 461.6 392.8 461.3M385.7 447.3 385.6 447.3M388.9 442.8 389.7 443.6M388.0 446.3 389.7 444.0M389.7 444.0 389.7 443.6M390.4 442.9 389.7 443.6M388.6 441.7 390.3 436.8M390.4 442.9 391.3 438.2M391.3 438.2 390.3 436.8M387.3 440.8 387.6 441.2M390.2 436.3 390.3 436.6M390.3 436.6 390.3 436.8M392.4 452.4 391.7 450.3M390.3 450.3 391.2 450.1M391.7 450.3 391.2 450.1M394.6 453.5 393.7 449.1M396.2 450.7 395.8 448.6M393.7 449.1 395.8 448.6M391.7 450.3 393.6 448.9M393.7 449.1 393.6 448.9M375.3 446.7 373.5 444.3M375.3 446.7 377.1 444.9M377.1 444.9 376.6 443.0M374.2 442.4 373.5 444.3M374.2 442.4 376.0 441.8M376.6 443.0 376.2 441.9M376.0 441.8 376.2 441.9M372.8 444.5 371.8 447.1M372.5 449.9 371.8 447.1M375.3 448.2 375.3 446.7M375.3 448.2 372.5 449.9M372.8 444.5 373.5 444.3M378.3 442.1 376.6 443.0M378.8 445.3 378.3 442.1M378.8 445.3 377.1 444.9M372.8 444.5 371.0 443.0M373.1 439.3 371.0 443.0M373.1 439.3 374.2 442.4M378.7 448.5 381.0 449.5M378.7 448.5 379.0 445.4M379.0 445.4 379.2 445.3M379.2 445.3 381.2 446.6M378.1 449.6 378.7 448.5M378.8 445.3 379.0 445.4M375.3 448.2 376.1 449.6M348.5 430.0 346.6 435.4M342.0 430.0 342.2 430.5M342.2 430.5 343.7 432.6 346.6 435.4M350.3 437.2 352.5 434.8 353.1 432.7 354.3 430.0M347.8 437.4 350.3 437.2M347.8 437.4 347.2 437.0M346.6 435.4 347.2 437.0M351.0 438.8 354.7 440.9M351.0 438.8 351.5 441.7 351.0 445.4M351.0 445.4 354.3 444.0M354.7 440.9 354.7 442.9M354.3 444.0 354.7 442.9M350.3 437.2 351.0 438.8M354.7 440.9 354.7 440.9M347.9 446.3 347.2 445.3M347.8 437.4 346.8 441.3 347.2 445.3M350.0 447.0 351.0 445.4M350.0 447.0 347.9 446.3M359.8 444.3 354.7 442.9M359.8 444.3 361.1 442.7M361.1 442.7 360.6 439.7M358.2 448.1 359.8 444.3M356.2 449.5 357.7 448.6M356.2 449.5 354.3 444.0M367.9 434.8 367.9 435.1M367.9 435.1 367.4 436.4M360.6 435.9 364.3 436.2 366.9 436.9M367.4 436.4 366.9 436.9M370.5 446.9 371.8 447.1M370.5 446.9 369.2 443.1M371.0 443.0 369.5 442.7M369.2 443.1 369.5 442.7M362.5 443.7 365.3 443.2M362.5 443.7 363.7 446.0 363.6 450.2M363.6 450.2 367.5 447.3M365.3 443.2 367.1 444.3M367.5 447.3 367.1 444.3M366.9 436.9 365.7 439.4 365.3 443.2M361.1 442.7 362.5 443.7M360.7 450.4 363.5 451.1M363.5 451.1 363.6 450.2M369.6 440.8 369.5 442.7M369.2 443.1 367.1 444.3M369.6 440.8 367.4 436.4M370.5 446.9 369.9 447.8M367.5 447.3 367.8 447.9M369.9 447.8 367.8 447.9M363.5 451.1 363.9 452.5M359.8 453.5 360.0 454.8M363.9 452.5 360.0 454.8M370.5 439.6 373.1 438.7M370.5 439.6 370.4 436.1M370.4 436.1 370.6 436.1M370.6 436.1 373.1 438.4M373.1 438.4 373.1 438.7M373.1 439.3 373.1 438.7M369.6 440.8 370.5 439.6M367.9 435.1 370.4 436.1M372.4 433.3 370.6 436.1M374.3 436.8 373.1 438.4M375.2 436.6 376.0 441.8M333.2 476.6 334.4 476.7M336.3 471.9 336.4 472.6M335.8 471.1 336.3 471.9M336.4 472.6 334.4 476.7M350.0 447.0 351.1 450.1M356.2 449.5 355.6 450.6M351.1 450.1 355.6 450.6M360.0 454.8 360.0 454.8M360.0 454.8 355.9 453.8M355.6 450.6 355.9 453.8M348.7 459.1 347.9 457.6M352.2 457.0 348.7 459.1M350.7 451.8 352.2 457.0M350.7 451.8 350.3 452.2M347.9 457.6 350.3 452.2M191.9 551.7 194.1 549.0M191.7 548.4 193.9 547.9M193.9 547.9 194.1 549.0M193.8 553.0 194.3 549.6M194.3 549.6 194.1 549.0M196.5 552.1 195.7 550.5M194.3 549.6 195.7 550.5M217.3 525.4 217.4 525.0M217.3 525.4 221.0 527.3M217.4 525.0 219.7 522.0M219.7 522.0 221.6 523.8M221.0 527.3 221.6 523.8M214.3 520.4 217.4 525.0M211.7 524.5 211.8 526.3M217.3 525.5 212.1 526.6M217.3 525.5 217.3 525.4M215.0 516.6 217.3 515.5M217.3 515.5 219.5 520.4M219.5 520.4 219.7 522.0M223.6 517.7 224.5 521.5M223.6 517.7 219.5 520.4M222.8 523.7 221.6 523.8M221.0 530.1 223.8 528.1M221.0 530.1 221.0 527.3M217.4 527.7 215.6 531.4M217.4 527.7 220.9 530.4M215.6 531.4 217.1 535.5M220.9 530.4 220.9 532.3M217.5 536.2 217.1 535.5M217.3 525.5 217.4 527.7M213.8 530.3 215.6 531.4M221.0 530.1 220.9 530.4M212.9 534.9 217.1 535.5M212.0 538.8 212.6 539.9M203.5 524.4 202.7 530.3M203.5 524.4 206.7 520.2M202.7 530.3 206.8 526.0M206.7 520.2 206.8 526.0M200.2 521.2 203.5 524.4M207.0 518.9 206.7 520.2M209.4 529.0 206.8 526.0M200.5 531.1 202.2 531.7M200.5 531.1 199.0 532.1M199.0 532.1 196.0 536.7M202.7 532.5 202.4 537.4M202.7 532.5 202.2 531.7M202.4 537.4 201.4 540.7M196.0 536.7 198.8 541.6M198.8 541.6 200.8 541.6M200.8 541.6 201.4 540.7M202.7 530.3 202.2 531.7M198.9 526.5 200.5 531.1M192.7 528.7 194.7 531.7 199.0 532.1M193.1 537.2 196.0 536.7M208.0 533.7 202.7 532.5M192.6 541.5 194.0 544.0M194.9 543.8 194.0 544.0M198.7 541.9 198.8 541.6M201.2 543.7 200.8 541.6M205.1 543.3 205.2 543.0M205.2 543.0 201.4 540.7M208.1 540.9 208.0 538.2M208.1 540.9 205.9 542.6M208.0 538.2 205.1 539.7M205.1 539.7 205.5 542.6M205.9 542.6 205.5 542.6M208.5 536.0 208.0 538.2M208.8 542.1 208.1 540.9M207.7 545.3 205.9 542.6M202.4 537.4 205.1 539.7M205.2 543.0 205.5 542.6M248.5 479.5 251.0 484.4M259.7 476.7 258.4 480.5 257.6 481.2 256.1 484.5M251.0 484.4 256.1 484.5M263.7 480.4 262.3 475.1M263.7 480.4 260.6 484.9M260.6 484.9 256.2 484.6M256.1 484.5 256.2 484.6M242.6 491.6 243.1 492.1M242.6 491.6 243.7 495.7 244.4 499.6 243.5 502.9M243.1 492.1 243.4 495.3 243.9 497.4 244.6 501.1M243.5 502.9 244.6 501.1M251.1 495.5 251.6 493.3M249.6 495.7 251.1 495.5M236.4 485.6 238.2 488.2 239.9 490.2 242.6 491.6M249.6 495.7 247.1 494.0 243.1 492.1M251.0 484.4 250.9 487.9 251.1 490.8 251.6 493.3M230.5 490.5 233.1 493.6 234.8 496.1 237.4 499.1 239.8 502.9M243.2 503.5 239.8 502.9M243.2 503.5 243.5 502.9M249.6 495.7 247.0 498.5 244.6 501.1M207.7 510.8 210.3 509.4 213.5 507.4M217.3 515.5 219.3 511.4M213.5 507.4 216.9 508.6 219.3 511.4M225.4 505.8 225.4 505.4M223.6 517.7 224.0 514.2 224.1 511.6 225.6 509.5 225.4 505.8M219.3 511.4 220.9 509.3 223.2 507.2 225.4 505.4M253.9 520.1 253.2 517.8M255.7 519.6 256.0 517.5M253.2 517.8 255.1 514.8M255.1 514.8 255.7 515.1M255.7 515.1 256.0 517.5M258.7 518.7 259.2 515.8M256.0 517.5 259.2 515.8M262.4 517.3 262.2 516.6M262.2 516.6 260.7 514.7M260.7 514.7 260.3 514.6M260.3 514.6 259.5 515.3M259.2 515.8 259.5 515.3M312.1 489.4 312.1 490.4M312.1 490.4 310.2 492.2M309.0 491.2 310.2 492.2M309.0 491.2 308.6 489.6M312.1 489.4 310.8 488.0M310.8 488.0 310.4 488.2M308.6 489.6 310.4 488.2M305.2 494.8 301.3 493.2M305.2 494.8 306.9 492.0 306.7 488.2M306.7 488.2 305.6 486.2M305.6 486.2 301.8 488.3 300.2 490.0M301.3 493.2 300.2 490.0M288.3 489.8 288.4 485.6M288.3 489.8 289.8 489.1M289.8 489.1 288.4 485.6M286.0 489.9 286.0 488.2M286.0 489.9 287.6 491.0M287.6 491.0 288.3 489.8M286.1 487.7 288.3 485.3M286.0 488.2 286.1 487.7M288.4 485.6 288.3 485.3M267.0 497.0 265.1 499.6M267.0 497.0 266.0 496.7M266.0 496.7 263.9 497.8M265.1 499.6 263.9 497.8M265.2 495.9 263.4 497.3M263.4 497.3 263.9 497.8M265.2 495.9 266.0 496.7M270.7 505.6 270.0 507.5M268.2 507.4 270.0 507.5M270.7 505.6 270.6 505.1M268.2 507.4 266.7 504.4M266.7 504.4 270.6 505.1M268.8 500.0 271.4 497.2M268.8 500.0 267.1 496.9M267.1 496.9 267.7 493.4M267.7 493.4 271.2 495.7M271.2 495.7 271.4 497.2M273.8 501.4 273.9 499.9M273.8 501.4 270.9 503.3M273.9 499.9 271.4 497.2M268.7 500.5 270.9 503.3M268.7 500.5 268.8 500.0M267.0 491.3 267.7 493.4M267.0 491.3 265.2 494.8M265.2 494.8 265.2 495.9M267.0 497.0 267.1 496.9M272.0 494.0 271.2 495.7M266.9 490.6 271.4 487.7M271.7 487.7 271.4 487.7M267.0 491.3 266.9 490.6M262.2 516.6 263.1 515.5M262.2 511.0 260.7 514.7M262.2 511.0 263.2 511.2M263.2 511.2 263.8 512.5M263.1 515.5 263.8 512.5M270.6 505.1 270.9 503.3M268.7 500.5 267.1 502.4M266.7 504.4 266.7 504.4M266.7 504.4 267.1 502.4M265.1 499.6 265.1 500.1M267.1 502.4 265.1 500.1M263.8 480.6 264.7 485.3M263.8 480.6 267.6 481.3M267.6 481.3 269.1 484.2M269.1 484.2 265.9 488.3M264.7 485.3 265.9 488.3M271.3 487.6 271.4 487.7M266.9 490.6 266.7 490.5M266.7 490.5 265.9 488.3M271.3 487.6 269.1 484.2M275.4 494.9 275.5 495.2M273.9 499.9 274.2 499.6M275.5 495.2 275.0 498.3M274.2 499.6 275.0 498.3M274.2 499.6 277.7 500.6M275.0 498.3 277.6 498.2M277.7 500.6 277.6 498.2M313.9 494.7 312.1 490.4M313.9 494.7 313.7 495.2M310.2 492.2 313.1 496.3M313.7 495.2 313.1 496.3M316.9 500.1 318.1 498.2M313.1 498.9 312.9 498.2M312.9 498.2 318.1 498.2M319.5 498.8 318.3 498.1M318.3 498.1 318.1 498.2M298.6 498.2 299.0 501.9M299.3 502.0 299.0 501.9M298.6 498.2 300.3 497.6M299.3 502.0 300.4 498.7M300.3 497.6 300.4 498.7M311.3 506.8 311.1 508.4M309.2 473.2 310.2 473.3M310.2 466.7 313.5 469.0M310.2 473.3 313.5 469.0M319.0 459.0 318.7 462.3 317.6 466.9M313.5 469.0 313.8 469.1M317.6 466.9 313.8 469.1M327.1 461.9 326.7 465.6M327.1 461.9 324.8 460.2M322.7 473.6 325.7 470.2M322.7 473.6 320.2 474.2M317.6 466.9 319.8 471.0 320.2 474.2M305.7 484.8 305.6 486.2M305.7 484.8 307.5 483.3M308.6 489.6 306.7 488.2M310.4 488.2 309.5 484.3M309.5 484.3 307.5 483.3M307.4 478.1 310.5 479.5M307.4 478.1 307.8 482.7M307.8 482.7 310.5 479.5M310.8 488.0 311.8 486.0M312.1 489.4 313.9 488.7M311.8 486.0 313.9 488.7M313.9 494.7 314.8 493.4M314.8 493.4 314.1 488.8M313.9 488.7 314.1 488.8M390.4 445.7 390.4 445.6M390.4 445.7 391.8 447.4M390.4 445.6 393.3 444.5M393.3 444.5 392.8 447.6M391.8 447.4 392.8 447.6M389.6 448.0 390.4 445.7M389.7 444.0 390.4 445.6M391.2 450.1 391.8 447.4M393.6 448.9 393.5 448.8M393.5 448.8 392.8 447.6M390.4 442.9 393.3 441.5M393.3 444.5 393.9 443.8M393.9 443.8 393.3 441.5M393.5 448.8 395.3 444.9M393.9 443.8 395.3 444.9M395.8 448.6 397.0 445.3M395.3 444.9 397.0 445.3M403.3 444.5 402.7 444.3M402.7 444.3 397.6 445.0M397.6 445.0 397.0 445.3M379.2 445.3 380.0 443.7M380.0 443.7 381.5 443.0M334.0 450.9 334.6 447.0 333.1 444.3 332.5 441.2 332.5 438.6M334.0 450.9 339.3 449.1M332.6 438.3 334.8 439.9 338.6 441.5M338.6 441.5 338.0 445.9 339.3 449.1M369.9 447.8 370.3 449.8M367.8 447.9 368.0 451.3M368.0 451.3 370.3 449.8M337.1 463.5 338.9 463.9M337.1 463.5 338.8 465.3 339.6 470.0M338.9 463.9 340.9 467.4M340.9 467.4 340.9 469.7M340.9 469.7 339.6 470.0M333.3 454.8 333.5 454.3M333.3 454.8 331.9 460.5M331.9 460.5 333.5 462.6M339.9 456.7 340.0 457.1M339.9 456.7 334.6 454.4M340.0 457.1 337.4 459.9 335.8 462.4M333.5 454.3 334.6 454.4M333.5 462.6 335.5 462.7M335.5 462.7 335.8 462.4M334.0 450.9 333.5 454.3M326.3 448.7 330.2 450.5 331.8 454.0 333.3 454.8M327.1 461.9 331.9 460.5M334.3 468.1 333.5 462.6M341.5 452.5 339.9 456.7M341.5 452.5 338.1 452.7 334.6 454.4M341.3 459.2 340.0 457.1M341.3 459.2 337.7 459.7 335.8 462.4M336.3 471.9 339.6 470.0M337.1 463.5 335.5 462.7M341.9 462.0 338.9 463.9M341.9 462.0 341.7 459.6M341.7 459.6 341.3 459.2M334.7 478.0 334.7 477.9M334.7 478.0 334.8 479.4M334.7 477.9 336.8 479.0M334.8 479.4 335.5 481.5M336.8 479.0 336.3 481.2M336.3 481.2 335.9 481.6M335.9 481.6 335.5 481.5M334.3 478.5 334.7 478.0M334.4 476.7 334.7 477.9M333.7 481.9 334.8 479.4M333.9 482.3 335.5 481.5M333.8 482.7 336.4 487.0M336.4 487.0 335.9 481.6M344.0 457.1 342.9 453.4M344.5 457.4 344.0 457.1M346.8 454.4 346.8 456.7M344.5 457.4 346.8 456.7M346.8 454.4 343.3 453.1M343.3 453.1 342.9 453.4M344.0 457.1 341.7 459.6M341.5 452.5 341.5 452.5M342.9 453.4 341.5 452.5M348.5 452.5 346.8 453.8M348.5 452.5 346.4 449.9M346.8 453.8 345.7 451.0M346.4 449.9 345.7 451.0M346.8 454.4 346.8 453.8M346.8 456.7 347.9 457.6M350.3 452.2 348.5 452.5M351.1 450.1 350.7 451.8M347.9 446.3 346.4 449.9M345.4 451.0 343.3 453.1M345.4 451.0 345.7 451.0M194.0 544.0 194.2 546.5M193.9 547.9 194.1 547.0M194.2 546.5 194.1 547.0M261.2 490.7 263.0 488.1 264.7 485.3M261.2 490.7 260.8 490.7M263.7 480.4 263.8 480.6M260.6 484.9 260.1 488.2M260.8 490.7 260.1 488.2M256.2 484.6 257.4 487.9M260.1 488.2 257.4 487.9M251.6 493.3 254.0 492.5M254.0 492.5 257.1 489.5M257.1 489.5 257.4 487.9M257.1 489.5 259.5 492.4M254.0 492.5 258.9 493.2M258.9 493.2 259.5 492.4M260.8 490.7 260.1 492.1M259.5 492.4 260.1 492.1M248.7 509.6 247.2 513.2M248.7 509.6 251.3 512.2M251.3 512.2 251.4 512.7M247.2 513.2 247.1 517.7M251.4 512.7 251.4 513.2M250.0 515.7 251.3 513.5M250.0 515.7 247.4 518.1M251.4 513.2 251.3 513.5M247.1 517.7 247.4 518.1M248.0 507.8 248.7 509.6M248.0 507.8 245.5 507.0M245.5 507.0 244.1 510.2M245.4 513.8 244.3 513.5M244.1 510.2 244.3 513.5M245.4 513.8 247.2 513.2M246.2 517.4 245.4 513.8M246.2 517.4 247.1 517.7M253.2 517.8 251.4 513.2M255.1 514.8 252.3 513.0M252.3 513.0 251.4 512.7M250.7 521.1 250.0 515.7M251.3 520.9 250.8 518.1 251.3 513.5M248.1 521.8 247.4 518.1M233.5 524.5 233.3 525.6M233.5 524.5 231.3 519.3M229.8 523.1 231.0 519.2M231.0 519.2 231.3 519.3M227.4 520.3 228.5 516.4M231.0 519.2 228.5 516.4M225.4 505.8 226.0 509.2 228.0 513.0 228.4 515.7M228.5 516.4 228.4 515.7M233.5 524.5 235.1 520.6M231.3 519.3 234.2 517.3M235.1 520.6 234.2 517.3M228.4 515.7 231.8 516.1 234.6 515.9M234.2 517.3 234.6 515.9M244.1 510.2 240.9 511.7M239.8 502.9 239.6 506.8 239.0 509.4M243.2 503.5 245.5 507.0M240.9 511.7 239.0 509.4M227.3 500.3 230.4 502.4 232.6 505.7 234.7 509.2 237.4 511.0M227.3 500.3 226.4 503.2M226.4 503.2 228.6 506.4 231.4 508.5 232.4 511.9 234.9 515.0M237.4 511.0 237.1 512.0M237.1 512.0 235.9 514.5M234.9 515.0 235.9 514.5M229.1 490.8 227.9 494.1 227.3 497.3 227.3 500.3M239.0 509.4 237.4 511.0M225.4 505.4 225.4 505.3M225.4 505.3 226.4 503.2M234.6 515.9 234.9 515.0M214.2 500.8 214.3 505.0M214.2 500.8 217.5 502.2 221.0 503.4 223.9 504.9M223.9 504.9 221.2 504.7 217.5 504.9 214.3 505.0M212.7 497.5 214.2 500.8M213.5 507.4 214.3 505.0M225.4 505.3 223.9 504.9M259.5 510.6 259.5 506.7M259.5 510.6 259.2 511.2M259.2 511.2 257.0 508.8M259.5 506.7 257.0 508.8M261.7 509.4 259.5 510.6M261.7 509.4 261.8 507.1M261.2 506.6 261.8 507.1M259.7 506.3 261.2 506.6M259.7 506.3 259.5 506.7M262.2 511.0 261.7 509.4M260.3 514.6 259.2 512.4M259.2 512.4 259.2 511.2M256.4 511.8 259.0 512.4M256.4 511.8 256.1 514.3M259.0 512.4 256.6 514.3M256.1 514.3 256.6 514.3M252.3 513.0 256.2 511.2M256.2 511.2 256.4 511.8M255.7 515.1 256.1 514.3M259.5 515.3 256.6 514.3M259.2 512.4 259.0 512.4M292.1 457.9 294.0 458.9M292.1 457.9 291.1 459.1M291.1 459.1 291.4 462.8 290.2 467.5 291.3 469.9 290.7 472.9 290.1 477.0M294.0 458.9 296.4 464.3M296.4 464.3 296.8 467.2 296.6 470.9 296.0 474.0M296.0 474.0 292.5 475.9 290.3 477.2M290.3 477.2 290.1 477.0M303.5 452.8 300.3 454.6 297.1 457.4 294.0 458.9M291.9 457.1 292.1 457.9M278.6 451.4 278.9 454.2 278.6 457.5 278.0 460.2 279.1 463.8M279.1 463.8 282.2 462.7 285.9 464.0M285.9 464.0 289.6 461.5 291.1 459.1M285.9 464.0 286.4 467.4 285.2 471.0 284.9 474.5M284.9 474.5 290.1 477.0M300.9 467.2 304.4 468.1M300.9 467.2 296.4 464.3M301.6 474.8 296.7 476.0M296.7 476.0 296.0 474.0M300.9 467.2 300.2 470.3 301.6 474.8M294.6 482.3 295.6 480.9M294.6 482.3 290.3 479.1M296.7 476.0 296.9 477.3M296.9 477.3 295.6 480.9M290.3 479.1 290.3 477.2M299.7 489.7 299.5 485.9M299.5 485.9 300.0 483.7M299.7 489.7 300.2 490.0M305.3 483.7 302.2 481.2M305.7 484.8 305.3 483.7M302.2 481.2 300.0 483.7M295.6 480.9 297.9 483.2 299.5 485.9M296.9 477.3 298.0 478.2M298.0 478.2 300.0 483.7M290.5 489.1 293.5 487.6M290.5 489.1 289.8 491.5M289.8 491.5 294.3 488.9M293.5 487.6 293.7 487.6M293.7 487.6 294.3 488.9M288.9 483.5 288.3 485.3M288.9 483.5 291.3 485.7 293.5 487.6M289.8 489.1 290.5 489.1M288.8 483.2 290.3 479.1M294.6 482.3 293.7 487.6M288.9 483.5 288.8 483.2M299.0 489.8 294.3 488.9M299.7 489.7 299.0 489.8M294.3 488.9 294.3 488.9M263.6 495.3 262.8 497.0M263.6 495.3 264.1 491.7M264.1 491.7 263.7 491.7M263.7 491.7 261.8 495.6M261.8 495.6 262.3 497.1M262.8 497.0 262.3 497.1M265.2 494.8 263.6 495.3M263.4 497.3 262.8 497.0M266.7 490.5 264.1 491.7M261.2 490.7 263.7 491.7M260.1 492.1 261.8 495.6M264.4 504.3 264.6 500.7M264.4 504.3 265.7 504.7M265.1 500.1 264.6 500.7M266.7 504.4 266.4 504.7M265.7 504.7 266.4 504.7M264.0 504.3 264.4 504.3M264.0 504.3 262.3 507.0M262.3 507.0 264.0 508.1M265.7 504.7 264.0 508.1M262.3 507.0 261.8 507.1M263.2 511.2 264.4 510.0M264.4 510.0 264.3 508.6M264.0 508.1 264.3 508.6M278.3 506.0 278.6 507.8M278.3 506.0 280.7 504.5M278.6 507.8 280.9 505.0M280.7 504.5 280.9 505.0M270.7 505.6 272.7 506.6M273.8 501.4 274.4 502.8M274.4 502.8 274.5 503.4M274.5 503.4 272.7 506.6M263.8 512.5 265.3 512.7M263.1 515.5 265.2 514.4M265.2 514.4 265.3 512.7M264.4 510.0 266.0 511.2M265.3 512.7 266.0 511.2M276.5 502.3 278.0 503.6M276.5 502.3 277.8 500.8M277.8 500.8 279.4 502.3M278.0 503.6 279.4 502.3M274.4 502.8 276.5 502.3M277.7 500.6 277.8 500.8M280.2 502.3 280.7 504.5M277.1 505.2 278.3 506.0M277.1 505.2 278.0 503.6M280.2 502.3 279.4 502.3M275.5 495.2 277.7 495.7M277.6 498.2 277.6 498.2M277.6 498.2 277.7 495.7M276.4 493.2 278.7 493.6M278.7 493.6 278.3 495.1M278.3 495.1 277.7 495.7M273.4 486.6 273.4 486.5M273.4 486.5 272.2 482.6 272.6 480.0M271.3 487.6 270.1 482.7 270.0 479.9M272.6 480.0 270.0 479.9M267.6 481.3 269.9 479.9M262.7 472.3 265.3 472.4 269.4 472.6M269.4 472.6 270.3 477.0 269.9 479.9M269.9 479.9 270.0 479.9M277.1 478.4 274.3 476.6M277.1 478.4 278.3 474.8M278.3 474.8 278.3 469.6M274.3 476.6 273.0 471.1M273.0 471.1 275.0 465.6M275.0 465.6 276.9 465.3M276.9 465.3 278.3 469.6M281.0 474.1 278.3 474.8M281.0 474.1 278.3 469.6M272.6 480.0 274.3 476.6M269.4 472.6 273.0 471.1M268.4 456.6 270.9 459.2 272.1 463.6 275.0 465.6M279.1 463.8 276.9 465.3M295.2 502.9 295.2 504.4M295.2 502.9 295.6 502.4M298.2 501.9 297.7 501.4M298.2 501.9 297.5 505.0M295.6 502.4 297.7 501.4M283.7 506.8 284.3 503.2 284.6 500.5M280.9 505.0 282.5 507.3M280.2 502.3 280.3 502.0M280.3 502.0 282.2 500.1M282.2 500.1 284.6 500.5M291.9 501.1 292.3 500.4M292.3 500.4 293.7 500.2M292.2 503.7 291.9 502.3M295.2 502.9 294.5 501.3M291.9 502.3 291.9 501.1M294.5 501.3 293.7 500.2M322.2 496.2 322.4 495.4M322.2 496.2 322.7 496.6M322.7 496.6 323.0 496.6M323.0 496.6 323.3 494.9M323.3 494.9 322.4 495.4M320.4 496.7 322.2 496.2M320.4 496.7 320.3 494.3M321.9 493.5 320.3 494.3M321.9 493.5 322.4 495.4M322.5 498.2 322.7 496.6M320.2 497.5 320.4 496.7M324.6 497.3 323.0 496.6M325.5 496.2 324.3 493.3M324.3 493.3 323.3 494.9M324.1 492.2 322.9 492.5M324.3 493.3 324.1 492.2M322.9 492.5 321.9 493.5M324.0 488.9 325.2 486.7M324.0 488.9 324.2 491.8M324.2 491.8 326.9 491.4M325.8 487.0 325.2 486.7M325.8 487.0 327.5 490.6M327.5 490.6 326.9 491.4M324.1 492.2 324.2 491.8M327.4 494.1 326.9 491.4M327.5 490.6 328.8 488.7M327.5 490.6 327.5 490.6M328.0 486.6 325.8 487.0M325.2 486.7 325.1 486.1M328.5 482.7 327.5 480.9M325.1 486.1 327.5 480.9M327.8 479.1 327.3 479.8M322.7 473.6 323.8 477.8 326.2 479.4M326.2 479.4 327.3 479.8M327.5 480.9 327.3 479.8M321.5 483.2 322.8 480.3M321.5 483.2 321.7 484.1M321.7 484.1 323.6 484.0M323.6 484.0 324.3 481.0M322.8 480.3 324.3 481.0M318.9 478.7 318.9 479.3M319.4 475.8 318.9 478.7M319.9 475.1 319.4 475.8M318.9 479.3 321.5 483.2M319.9 475.1 321.7 477.8 322.8 480.3M325.1 486.1 323.6 484.0M326.2 479.4 324.3 481.0M320.2 474.2 319.9 475.1M313.7 495.2 318.0 497.1M313.1 496.3 312.7 497.9M318.0 497.1 318.3 498.1M312.9 498.2 312.8 498.1M312.7 497.9 312.8 498.1M302.3 503.8 302.7 505.2M302.3 503.8 301.2 502.3M300.1 503.1 301.2 502.3M300.1 503.1 299.7 505.5M302.7 505.2 302.6 506.3M304.1 502.2 303.7 503.5M304.1 502.2 303.3 501.3M303.3 501.3 302.3 503.8M303.7 503.5 302.7 505.2M303.0 500.8 301.4 501.7M301.4 501.7 301.2 502.3M303.3 501.3 303.0 500.8M301.4 501.7 300.4 498.7M299.3 502.0 300.1 503.1M298.2 501.9 299.0 501.9M305.4 505.7 303.7 503.5M305.4 505.7 304.8 506.8M291.9 502.3 290.0 503.0M290.0 504.4 290.0 503.0M302.9 498.9 303.1 499.4M302.9 498.9 305.5 495.1M305.5 495.1 305.8 495.5M305.8 495.5 303.3 499.4M303.3 499.4 303.1 499.4M303.0 500.8 303.1 499.4M300.9 496.5 300.3 497.6M300.9 496.5 302.9 498.9M301.3 493.2 300.9 496.5M305.2 494.8 305.5 495.1M312.7 497.9 310.5 497.8M309.0 491.2 308.1 494.5M308.1 494.5 310.5 497.8M305.8 495.5 305.8 495.6M308.1 494.5 305.8 495.6M310.2 473.3 310.3 473.3M313.8 469.1 313.8 469.6M313.8 469.6 311.3 473.3M310.3 473.3 311.3 473.3M313.8 469.6 313.7 474.4M311.3 473.3 313.7 474.4M310.3 473.3 311.9 475.7M313.7 474.4 313.7 474.4M311.9 475.7 313.7 474.4M308.6 473.9 308.6 474.4M308.6 474.4 310.6 478.2M311.9 475.7 310.6 478.2M306.9 477.2 308.6 474.4M306.9 477.2 307.4 478.1M310.5 479.5 310.7 479.4M310.6 478.2 310.7 479.4M319.4 475.8 314.5 475.7M314.5 475.7 313.7 474.4M314.8 493.4 314.9 493.4M318.0 497.1 317.9 496.1M314.9 493.4 317.0 494.4M317.9 496.1 317.0 494.4M317.9 483.1 316.2 484.3M317.9 483.1 319.4 486.1M319.4 486.1 319.3 486.2M319.3 486.2 315.5 486.5M316.2 484.3 315.3 485.6M315.3 485.6 315.4 486.4M315.5 486.5 315.4 486.4M315.1 480.4 316.2 484.3M315.1 480.4 318.9 478.7M318.9 479.3 317.9 483.1M321.1 485.7 321.7 484.1M321.1 485.7 319.4 486.1M314.5 485.0 312.1 484.7M314.5 485.0 313.8 480.0M311.8 480.3 313.5 479.7M311.8 480.3 311.8 484.2M311.8 484.2 312.1 484.7M313.8 480.0 313.5 479.7M311.8 486.0 312.1 484.7M314.1 488.8 315.4 486.4M315.3 485.6 314.5 485.0M315.1 480.4 313.8 480.0M314.5 475.7 313.5 479.7M310.7 479.4 311.8 480.3M309.5 484.3 311.8 484.2M307.8 482.7 307.5 483.3M395.1 440.1 393.5 440.2M395.1 440.1 397.7 438.6M397.7 438.6 396.2 433.3M393.5 440.2 394.7 435.8M393.5 440.2 393.5 440.2M396.2 433.3 394.7 435.8M393.3 441.5 393.5 440.2M397.6 445.0 395.1 440.1M402.7 444.3 400.3 441.3 397.7 438.6M396.4 430.0 396.2 433.3M391.3 438.2 393.5 440.2M390.3 436.6 394.7 435.8M379.6 441.4 381.7 440.1M379.6 441.4 378.4 439.7M378.4 439.3 378.4 439.6M378.4 439.3 380.8 438.4M380.8 438.4 381.7 439.5M378.4 439.6 378.4 439.7M380.0 443.7 379.6 441.4M378.3 442.1 378.4 439.7M377.3 436.4 378.4 439.3M376.2 441.9 378.4 439.6M380.7 435.5 380.8 438.4M347.2 437.0 344.0 439.6M347.2 445.3 344.6 445.0M344.6 445.0 344.0 439.6M338.6 441.5 339.4 441.6M342.2 430.5 342.7 433.8 343.0 435.2 342.0 439.1M339.4 441.6 342.0 439.1M342.0 439.1 344.0 439.6M363.9 452.5 365.6 455.0M368.0 451.3 367.6 453.6M367.6 453.6 365.6 455.0M336.4 487.0 336.4 487.0M327.5 490.6 329.1 492.1M344.0 482.8 342.4 480.2M342.4 480.2 341.1 484.4M343.5 469.5 343.6 469.3M342.0 471.0 343.5 469.5M342.0 471.0 340.9 469.7M340.9 467.4 342.5 465.0M343.6 469.3 342.5 465.0M341.9 462.0 343.2 463.6M343.2 463.6 342.5 465.0M355.9 453.8 355.9 453.9M352.2 457.0 353.1 457.6M355.9 453.9 354.4 457.1M353.1 457.6 354.4 457.1M340.1 449.6 342.3 445.1M340.1 449.6 341.4 452.2M341.4 452.2 343.6 448.0M343.6 448.0 343.7 445.5M343.7 445.5 342.3 445.1M339.4 441.6 342.3 445.1M339.3 449.1 340.1 449.6M341.5 452.5 341.4 452.2M345.4 451.0 343.6 448.0M344.6 445.0 343.7 445.5M197.9 545.8 197.9 546.0M194.2 546.5 196.5 546.6M196.5 546.6 197.9 546.0M201.2 546.0 198.0 546.2M200.0 551.0 198.5 549.0M198.0 546.2 198.5 549.0M198.0 546.2 197.9 546.0M251.1 495.5 252.0 497.8M248.0 507.8 250.1 504.7 251.4 501.4M251.4 501.4 252.0 498.2M252.0 497.8 252.0 498.2M253.5 509.0 256.3 508.9M253.5 509.0 253.3 505.5M253.3 505.5 256.1 506.1M256.1 506.1 256.3 508.9M256.3 508.9 256.3 508.9M256.2 511.2 256.3 508.9M251.3 512.2 253.5 509.0M251.4 501.4 253.3 505.5M252.0 498.2 254.0 500.9 253.7 502.8 256.4 505.2M256.4 505.2 256.1 506.1M257.0 508.8 256.3 508.9M238.6 517.3 237.2 521.2M238.6 517.3 240.0 517.3M240.0 517.3 241.3 522.2M241.3 522.2 237.4 521.7M237.4 521.7 237.2 521.2M235.9 514.5 238.6 517.3M235.1 520.6 237.2 521.2M237.1 512.0 241.0 515.7M241.0 515.7 240.0 517.3M237.3 524.6 237.4 521.7M242.0 523.3 241.3 522.2M244.3 517.5 243.4 515.8M244.3 517.5 243.5 520.9M243.5 520.9 241.1 515.7M243.4 515.8 241.2 515.4M241.2 515.4 241.1 515.7M246.2 517.4 244.3 517.5M244.3 513.5 243.4 515.8M243.0 523.1 243.5 520.9M241.0 515.7 241.1 515.7M240.9 511.7 241.2 515.4M286.1 487.7 285.7 485.1 283.5 481.6M288.8 483.2 283.7 481.2M283.5 481.6 283.7 481.2M284.9 474.5 284.6 475.0M283.7 481.2 283.6 477.0 284.6 475.0M277.1 478.4 277.8 479.4M281.0 474.1 281.4 474.5M281.4 474.5 280.3 477.0 277.8 479.4M281.4 474.5 284.6 475.0M273.4 486.5 276.5 484.2 279.0 482.9M279.0 482.9 277.8 479.4M302.2 481.2 302.2 481.1M298.0 478.2 298.7 478.3M298.7 478.3 302.2 481.1M278.7 493.6 278.9 493.2M276.6 490.8 277.1 490.8M277.1 490.8 278.6 492.6M278.9 493.2 278.6 492.6M283.5 493.7 281.7 495.3M281.7 495.3 279.5 493.1M283.6 491.6 283.5 493.7M283.6 491.6 282.6 490.0M282.6 490.0 279.8 492.3M279.5 493.1 279.8 492.3M266.6 509.6 265.3 508.1M266.6 509.6 266.3 505.6M266.3 505.6 265.3 508.1M266.4 504.7 266.3 505.6M264.3 508.6 265.3 508.1M277.1 505.2 276.1 505.8M274.5 503.4 275.9 505.6M276.1 505.8 275.9 505.6M279.9 500.5 278.7 498.2M279.9 500.5 280.0 496.9M278.7 498.2 279.5 496.9M280.0 496.9 279.5 496.9M280.3 502.0 279.9 500.5M277.6 498.2 278.7 498.2M282.2 500.1 281.5 496.1M281.5 496.1 280.0 496.9M278.3 495.1 279.5 496.9M281.5 496.1 281.7 495.3M278.9 493.2 279.5 493.1M298.2 498.2 297.7 500.9M298.2 498.2 297.1 497.5M297.7 500.9 296.4 500.1M296.4 500.1 296.3 498.2M297.1 497.5 296.4 497.8M296.3 498.2 296.4 497.8M298.6 498.2 298.2 498.2M297.7 501.4 297.7 500.9M297.4 494.5 299.0 489.8M297.4 494.5 297.1 497.5M295.6 502.4 296.4 500.1M294.5 501.3 296.3 498.2M289.5 499.9 288.9 501.7M289.5 499.9 290.6 500.5M290.6 500.5 290.9 500.7M290.9 500.7 289.7 502.5M289.7 502.5 288.9 501.9M288.9 501.9 288.9 501.7M291.9 501.1 290.9 500.7M291.0 497.8 291.5 497.3M292.3 500.4 291.5 497.3M291.0 497.8 290.6 500.5M290.0 503.0 289.7 502.5M288.7 504.9 288.1 503.3M288.1 503.3 288.9 501.9M287.7 500.8 287.9 498.6M287.7 500.8 285.9 501.6M287.9 498.6 285.2 498.5M285.2 498.5 284.6 500.5M285.9 501.6 284.6 500.5M288.9 501.7 287.7 500.8M286.8 503.4 285.9 501.6M288.1 503.3 286.8 503.4M285.2 495.8 285.2 498.5M285.2 495.8 283.5 493.7M284.6 500.5 284.6 500.5M286.4 505.8 286.8 503.4M288.1 498.4 289.3 499.0M288.1 498.4 288.2 494.2M288.2 494.2 288.5 493.7M289.3 499.0 289.5 498.7M289.5 498.7 289.4 494.0M288.5 493.7 289.0 493.8M289.0 493.8 289.4 494.0M287.9 498.6 288.1 498.4M289.5 499.9 289.3 499.0M285.2 495.8 288.2 494.2M286.0 489.9 283.6 491.6M287.6 491.0 288.5 493.7M291.0 497.8 289.5 498.7M289.7 494.1 289.4 494.0M289.7 494.1 291.6 496.5M291.6 496.5 291.5 497.3M289.8 491.5 289.0 493.8M294.1 489.6 294.3 488.9M294.1 489.6 292.5 491.7 289.7 494.1M293.7 500.2 293.8 499.7M296.4 497.8 295.7 497.4M295.7 497.4 293.8 499.7M321.1 485.7 321.7 487.3M324.0 488.9 322.3 488.2M322.3 488.2 321.7 487.3M322.9 492.5 321.3 490.9M320.3 494.3 319.9 493.8M319.9 493.8 321.3 490.9M317.9 496.1 319.6 493.5M319.9 493.8 319.6 493.5M322.3 488.2 321.1 490.2M321.7 487.3 319.4 489.8M319.4 489.8 321.1 490.2M321.3 490.9 321.1 490.2M367.6 453.6 369.4 454.3M370.3 449.8 371.4 450.2M369.4 454.3 371.4 450.2M375.3 455.1 374.2 454.6M372.5 449.9 372.5 449.9M374.2 454.6 373.2 453.6M373.2 453.6 372.5 449.9M372.5 449.9 371.4 450.2M337.3 478.6 338.1 482.3M337.3 478.6 337.7 478.1M337.7 478.1 339.6 480.4M339.6 480.4 339.1 481.9M339.1 481.9 338.3 482.5M338.1 482.3 338.3 482.5M336.8 479.0 337.3 478.6M336.3 481.2 338.1 482.3M336.4 472.6 337.8 474.9M337.8 474.9 338.0 475.9M338.0 475.9 337.7 478.1M341.0 484.5 339.1 481.9M337.3 486.5 338.3 482.5M343.2 463.6 344.6 463.8M344.5 457.4 345.2 462.3M345.2 462.3 344.6 463.8M343.6 469.3 344.4 467.4M344.4 467.4 344.9 464.4M344.6 463.8 344.9 464.4M196.4 548.4 196.8 548.4M196.4 548.4 195.8 550.4M196.8 548.4 197.4 548.9M195.8 550.4 197.4 548.9M194.1 547.0 196.4 548.4M196.5 546.6 196.8 548.4M195.7 550.5 195.8 550.4M198.5 549.0 197.4 548.9M261.2 506.6 261.7 502.8M264.0 504.3 262.5 501.8M261.7 502.8 262.5 501.8M264.6 500.7 262.5 501.7M262.5 501.7 262.5 501.8M252.0 497.8 254.3 498.3M256.4 505.2 257.7 504.1M254.3 498.3 255.9 500.5 257.7 504.1M261.7 502.8 259.0 502.3M259.7 506.3 258.6 504.0M259.0 502.3 258.6 504.0M258.6 504.0 257.7 504.1M302.4 477.0 302.4 479.8M302.4 477.0 302.7 476.4M302.4 479.8 305.4 478.4M302.7 476.4 304.2 475.8M304.2 475.8 305.4 477.6M305.4 477.6 305.4 478.4M302.2 481.1 302.4 479.8M298.7 478.3 302.4 477.0M301.6 474.8 302.7 476.4M305.3 483.7 305.4 478.4M305.1 470.9 304.2 475.8M306.9 477.2 305.4 477.6M274.4 509.4 274.7 507.6M274.4 509.4 273.3 509.6M274.7 507.6 272.8 506.8M273.3 509.6 273.3 509.6M273.3 509.6 272.7 507.8M272.8 506.8 272.7 507.8M275.9 505.6 274.7 507.6M272.7 506.6 272.8 506.8M270.5 509.2 272.7 507.8M270.5 509.2 270.5 509.5M270.5 509.5 273.3 509.6M270.0 507.5 270.5 509.2M278.6 507.8 278.5 508.4M278.7 509.1 278.5 508.4M270.5 509.5 270.3 510.3M272.3 512.3 270.9 510.9M272.8 512.1 273.3 509.6M270.3 510.3 270.9 510.9M291.8 496.4 293.5 497.7M291.8 496.4 294.0 493.7M293.5 497.7 294.9 496.2M294.0 493.7 294.7 495.2M294.7 495.2 294.9 496.2M291.6 496.5 291.8 496.4M293.8 499.7 293.5 497.7M294.1 489.6 294.0 493.7M295.7 497.4 294.9 496.2M297.4 494.5 294.7 495.2M309.5 503.7 309.3 504.5M312.8 498.1 311.2 501.1 309.5 503.7M311.0 505.1 309.4 504.7M309.3 504.5 309.4 504.7M309.3 508.0 309.3 506.0M309.4 504.7 309.3 506.0M307.3 507.4 307.3 507.1M309.3 506.0 307.3 507.1M305.8 495.6 306.1 497.0M303.3 499.4 303.5 499.3M303.5 499.3 305.9 497.7M305.9 497.7 306.1 497.0M310.5 497.8 310.1 498.1M310.1 498.1 306.9 497.5M306.1 497.0 306.9 497.5M318.7 489.0 319.3 489.8M318.7 489.0 317.3 489.3M319.3 489.8 319.4 493.2M316.6 491.3 319.2 493.2M316.6 491.3 317.3 489.3M319.2 493.2 319.4 493.2M319.3 486.2 318.7 489.0M319.4 489.8 319.3 489.8M315.5 486.5 317.3 489.3M319.6 493.5 319.4 493.2M317.0 494.4 319.2 493.2M314.9 493.4 316.6 491.3M370.6 454.5 369.7 454.6M370.6 454.5 372.2 457.0M369.7 454.6 370.1 456.2M370.1 456.2 371.9 457.6M372.2 457.0 371.9 457.6M369.4 454.3 369.7 454.6M373.2 453.6 370.6 454.5M374.2 454.6 372.2 457.0M369.9 459.2 365.6 455.1M365.6 455.0 365.6 455.1M369.9 459.2 370.1 456.2M372.1 459.9 371.9 457.6M370.2 461.8 370.1 461.6M370.1 461.6 369.9 459.2M342.0 471.0 342.1 471.2M342.1 472.2 342.1 471.2M342.1 472.2 342.0 472.8M337.8 474.9 341.6 473.4M342.0 472.8 341.6 473.4M338.0 475.9 340.6 477.2M341.6 473.4 340.6 477.2M339.6 480.4 341.3 479.1M340.6 477.2 341.3 479.1M348.7 459.1 348.7 460.0M345.2 462.3 348.6 460.1M348.7 460.0 348.6 460.1M355.1 465.8 355.5 467.9M355.1 465.8 353.4 464.5M353.4 464.5 352.2 467.3 352.3 470.7M355.5 467.9 353.0 471.1M352.3 470.7 353.0 471.1M365.6 455.1 365.3 456.5M370.1 461.6 365.9 458.1M365.9 458.1 365.3 456.5M366.2 464.9 366.1 464.8M366.2 464.9 366.3 460.7 365.9 458.1M363.5 458.4 365.3 456.5M363.5 458.4 363.0 460.4M363.0 460.4 366.1 464.8M357.3 458.3 357.3 461.6M357.3 458.3 354.7 457.6M354.8 458.0 354.7 457.6M354.8 458.0 356.7 461.3M356.7 461.3 357.3 461.6M355.9 453.9 358.0 457.5M358.0 457.5 357.3 458.3M354.4 457.1 354.7 457.6M354.5 462.8 354.8 458.0M354.5 462.8 356.7 461.3M359.9 461.0 360.4 457.4M359.9 461.0 358.3 461.1M358.3 461.1 358.4 457.7M358.4 457.7 360.0 456.6M360.0 456.6 360.4 457.4M358.0 457.5 358.4 457.7M357.4 461.7 357.3 461.6M357.4 461.7 358.3 461.1M360.0 454.8 360.0 456.6M363.5 458.4 360.4 457.4M258.9 493.2 258.7 494.8M262.3 497.1 262.0 497.6M258.7 494.8 262.0 497.6M254.3 498.3 257.6 498.2M258.7 494.8 257.6 498.2M278.8 490.0 279.3 490.3M278.8 490.0 278.3 488.7M279.3 490.3 280.2 489.4M278.3 488.7 278.3 488.7M278.3 488.7 280.2 483.7M280.2 483.7 280.8 483.9M280.8 483.9 281.4 485.9M280.2 489.4 281.4 486.0M281.4 485.9 281.4 486.0M278.6 492.6 278.8 490.0M279.8 492.3 279.8 491.9M279.8 491.9 279.3 490.3M277.1 490.8 278.3 488.7M279.8 491.9 280.2 489.4M274.3 488.2 278.3 488.7M279.0 482.9 280.2 483.7M283.5 481.6 280.8 483.9M286.0 488.2 281.4 485.9M282.6 490.0 281.4 486.0M275.4 510.2 276.5 506.9M275.4 510.2 275.6 510.7M276.8 510.1 277.0 507.7M276.5 506.9 277.0 507.7M276.1 505.8 276.5 506.9M274.4 509.4 275.4 510.2M278.5 508.4 277.0 507.7M270.3 510.3 269.2 511.3M268.2 507.4 267.3 510.5M269.2 511.3 267.3 510.5M266.6 509.6 267.0 510.7M267.3 510.5 267.0 510.7M266.0 511.2 266.8 511.0M267.0 510.7 266.8 511.0M305.4 505.7 305.8 505.0M307.3 507.1 306.9 505.0M305.8 505.0 306.9 505.0M309.3 504.5 308.2 504.1M306.9 505.0 308.2 504.1M342.4 480.2 342.3 479.6M341.3 479.1 342.3 479.5M342.3 479.6 342.3 479.5M353.1 457.6 352.6 462.7M353.3 464.3 353.1 464.2M354.5 462.8 353.3 464.3M352.6 462.7 353.1 464.2M348.7 460.0 350.8 461.9M352.6 462.7 350.8 461.9M344.4 467.4 346.8 469.2M343.5 469.5 345.5 470.2M346.8 469.2 346.7 469.3M345.5 470.2 346.7 469.3M353.0 471.1 354.1 472.5M354.1 472.5 357.6 470.6M355.5 467.9 357.1 469.6M357.6 470.6 357.1 469.6M259.0 501.6 258.6 499.2M259.0 501.6 262.3 500.8M258.6 499.2 261.8 498.0M262.3 500.8 261.8 498.0M259.0 502.3 259.0 501.6M257.6 498.2 258.6 499.2M262.5 501.7 262.3 500.8M262.0 497.6 261.8 498.0M266.6 515.2 267.0 512.1M267.0 512.1 268.2 514.4M265.2 514.4 266.1 515.4M266.8 511.0 267.0 512.1M269.2 511.3 269.4 513.8M270.9 510.9 270.5 513.2M304.1 502.2 304.8 502.3M305.8 505.0 305.8 504.8M304.8 502.3 305.8 504.8M308.2 504.1 307.6 502.3M309.5 503.7 308.8 500.2M307.6 502.3 308.8 500.2M306.9 497.5 308.0 499.7M310.1 498.1 308.9 499.7M308.0 499.7 308.9 499.7M308.9 499.7 308.8 500.2M342.0 472.8 342.5 473.8M342.3 479.5 342.7 477.2M342.5 473.8 342.7 477.2M342.5 473.8 344.4 475.4M342.7 477.2 344.3 476.1M344.4 475.4 344.3 476.1M342.3 479.6 344.8 478.8M344.3 476.1 344.8 478.8M346.6 481.4 345.8 479.1M345.8 479.1 344.8 478.8M350.8 461.9 350.0 464.2M353.1 464.2 351.2 465.3M351.2 465.3 351.1 465.3M350.0 464.2 351.1 465.3M348.6 460.1 348.5 464.1M350.0 464.2 348.5 464.1M348.5 468.7 347.6 467.6M348.5 468.7 351.0 470.0M351.0 470.0 350.5 467.7M350.5 467.7 348.7 466.2M347.6 467.6 347.6 466.2M348.7 466.2 347.9 465.9M347.6 466.2 347.9 465.9M353.3 464.3 353.4 464.5M351.2 465.3 350.5 467.7M352.3 470.7 351.8 470.8M351.3 470.6 351.8 470.8M351.3 470.6 351.0 470.0M351.1 465.3 348.7 466.2M344.9 464.4 347.6 466.2M346.8 469.2 347.6 467.6M348.5 464.1 347.9 465.9M343.6 471.7 345.1 472.8M343.6 471.7 345.5 471.7M345.5 471.7 345.1 472.8M342.1 471.2 343.6 471.7M345.5 470.2 345.5 471.7M345.5 471.7 345.5 471.7M350.4 475.5 351.2 473.8M350.4 475.5 352.5 477.5M351.2 473.8 353.3 476.8M354.1 472.5 354.6 475.8M351.8 470.8 351.2 473.8M359.0 471.5 357.6 470.6M359.2 472.1 359.0 471.5M362.6 464.1 361.6 463.2M366.1 464.8 362.6 464.1M363.0 460.4 361.5 462.8M361.6 463.2 361.5 462.8M359.9 461.0 361.3 462.7M361.3 462.7 361.5 462.8M357.5 462.8 359.8 464.2M357.5 462.8 357.4 461.7M361.3 462.7 359.8 464.2M362.8 466.5 362.0 467.9M362.8 466.5 364.9 467.1M362.0 467.9 362.9 469.0M366.2 464.9 366.5 465.5M362.6 464.1 362.8 466.5M357.1 469.6 357.4 466.9M355.1 465.8 356.7 465.0M357.4 466.9 356.7 465.0M306.7 501.8 305.6 501.1M306.7 501.8 307.2 501.8M307.2 501.8 307.4 500.1M307.4 500.1 306.0 499.0M306.0 499.0 305.6 500.5M305.6 500.5 305.6 501.1M304.8 502.3 305.6 501.1M305.8 504.8 306.7 501.8M307.6 502.3 307.2 501.8M308.0 499.7 307.4 500.1M305.9 497.7 306.0 499.0M303.5 499.3 305.6 500.5M342.1 472.2 345.1 473.7M345.1 472.8 345.1 473.0M345.1 473.7 345.1 473.0M344.4 475.4 345.5 474.8M345.1 473.7 345.5 474.8M345.5 471.7 346.8 472.6M345.1 473.0 346.8 472.6M362.0 467.9 361.7 467.9M359.0 471.5 359.4 470.2M359.4 470.2 361.7 467.9M361.6 463.2 361.1 466.0M361.7 467.9 361.1 466.0M358.7 466.6 357.2 464.2M358.7 466.6 359.3 466.8M359.3 466.8 359.4 466.6M359.4 466.6 359.3 465.3M359.3 465.3 357.3 464.0M357.3 464.0 357.2 464.2M357.4 466.9 358.7 466.6M356.7 465.0 357.2 464.2M359.4 470.2 359.3 466.8M361.1 466.0 359.4 466.6M359.8 464.2 359.3 465.3M357.5 462.8 357.3 464.0M347.5 472.2 347.3 472.8M347.5 472.2 348.4 471.8M347.3 472.8 347.1 475.4M348.4 471.8 349.6 471.8M349.6 471.8 349.1 476.1M348.9 476.3 349.1 476.1M348.9 476.3 347.2 475.5M347.2 475.5 347.1 475.4M346.7 469.3 347.5 472.2M346.8 472.6 347.3 472.8M348.5 468.7 348.4 471.8M345.5 474.8 347.1 475.4M351.3 470.6 349.6 471.8M350.4 475.5 349.1 476.1M349.6 479.7 348.9 476.3M345.8 479.1 347.2 475.5" fill="none" stroke="#86688e" stroke-width="0.65"/>
<path d="M745.0 150.0 L752.0 146.0 L756.0 152.0M745.0 200.0 L750.0 195.0 L756.0 198.0M745.0 230.0 L756.0 228.0M745.0 320.0 L752.0 318.0 L756.0 322.0M745.0 350.0 L756.0 349.0M748.0 130.0 L749.0 180.0M748.0 250.0 L747.0 280.0M470.0 441.0 L472.0 452.0 L486.0 455.0 L488.0 463.0M486.0 441.0 L488.0 455.0M520.0 441.0 L524.0 452.0 L524.0 465.0M548.0 441.0 L548.0 464.0M524.0 452.0 L548.0 452.0M578.0 441.0 L580.0 447.0 L595.0 449.0 L603.0 446.0M430.0 441.0 L436.0 455.0 L452.0 458.0 L454.0 466.0M452.0 441.0 L455.0 458.0M400.0 452.0 L420.0 452.0 L430.0 441.0M405.0 441.0 L408.0 458.0 L412.0 467.0M575.0 441.0 L578.0 460.0" fill="none" stroke="#a0a0b0" stroke-width="0.6"/>
<g fill="none" stroke-linejoin="round">
<path d="M166.0 441.0 L189.0 482.0 L108.0 532.0 L129.0 571.0 L131.0 583.0 L146.0 597.0 L290.0 558.0 L376.0 530.0 L500.0 499.0 L509.5 495.0 L576.0 479.0 L640.0 463.0 L658.0 458.0 L668.0 453.0 L680.0 446.0 L695.0 441.0" stroke="#d2c2a4" stroke-width="3.4"/>
<path d="M166.0 441.0 L189.0 482.0 L108.0 532.0 L129.0 571.0 L131.0 583.0 L146.0 597.0 L290.0 558.0 L376.0 530.0 L500.0 499.0 L509.5 495.0 L576.0 479.0 L640.0 463.0 L658.0 458.0 L668.0 453.0 L680.0 446.0 L695.0 441.0" stroke="#8c7050" stroke-width="3.0" stroke-linecap="round" stroke-dasharray="0.01 3.4"/>
<path d="M745.0 116.0 L756.0 116.0 L756.5 280.0 L758.0 290.0 L756.5 300.0 L756.5 386.0 L745.0 388.0" stroke="#dccfb8" stroke-width="3"/>
<path d="M745.0 116.0 L756.0 116.0 L756.5 280.0 L758.0 290.0 L756.5 300.0 L756.5 386.0 L745.0 388.0" stroke="#a08868" stroke-width="2.5" stroke-linecap="round" stroke-dasharray="0.01 3"/>
<path d="M329.0 441.0 L323.0 449.6 L320.5 463.0 L316.0 473.0 L314.0 484.0 L310.0 494.0 L315.0 502.0 L322.5 511.4 L345.6 530.0 L350.0 538.0 M493.7 441.0 L503.0 450.6 L505.0 458.0 L509.5 463.3 L509.5 495.0 M569.5 441.0 L573.7 452.7 L575.8 457.0 L575.8 479.0 M745.0 289.0 L757.0 289.0" stroke="#e8d8c8" stroke-width="2.6"/>
<path d="M329.0 441.0 L323.0 449.6 L320.5 463.0 L316.0 473.0 L314.0 484.0 L310.0 494.0 L315.0 502.0 L322.5 511.4 L345.6 530.0 L350.0 538.0 M493.7 441.0 L503.0 450.6 L505.0 458.0 L509.5 463.3 L509.5 495.0 M569.5 441.0 L573.7 452.7 L575.8 457.0 L575.8 479.0 M745.0 289.0 L757.0 289.0" stroke="#a46c54" stroke-width="2.5" stroke-linecap="round" stroke-dasharray="0.01 3.2"/>
</g>
<text x="213" y="481" font-family="Liberation Sans" font-size="17.6" fill="#a27c58" letter-spacing="0.25">Fairfield</text>
<g fill="#c4d5e7"><ellipse cx="228" cy="456" rx="2" ry="6" transform="rotate(-25 228 456)"/><ellipse cx="262" cy="458" rx="1.5" ry="3"/><ellipse cx="302" cy="458" rx="2" ry="2.5"/><ellipse cx="118" cy="545" rx="1" ry="3"/><ellipse cx="140" cy="520" rx="1" ry="2.5"/></g>
</svg>
</div>

<!-- Dataview window -->
<div class="win" style="left:6px;top:66px;width:739px;height:375px;border-color:#22404e;border-right-width:2px;background:linear-gradient(#cadcf0 0px,#b9d0ea 8px,#a6c3e4 24px,#b3cde8 27px,#b8cde4 200px,#b8d6f0 100%);box-shadow:inset 1px 1px 0 #dce8f4,inset -2px 0 0 #a4d6f6,inset 0 -2px 0 #b4dcf6"></div>
<svg class="a" style="left:15px;top:77px" width="15" height="12" viewBox="0 0 15 12"><rect x="0.5" y="0.5" width="14" height="11" fill="#fff" stroke="#5a7aa6"/><rect x="0.5" y="0.5" width="14" height="3" fill="#7d9cc8"/><path d="M0 6.5h15M0 9h15M5 3v9M10 3v9" stroke="#8aa0c0"/></svg>
<div class="a" style="left:33px;top:76px;font-size:11px;letter-spacing:-0.3px;color:#1b2f4a;white-space:nowrap">Dataview1 - Census Block</div>
<div class="wb" style="left:650px;top:75px;width:27px;height:15px"><svg width="27" height="15"><rect x="8.5" y="7.5" width="9" height="3" rx="1" fill="#fff" stroke="#3a4a5e"/></svg></div>
<div class="wb" style="left:679px;top:75px;width:27px;height:15px"><svg width="27" height="15"><rect x="8.5" y="3.5" width="9" height="7" rx="1.2" fill="#fff" stroke="#3a4a5e"/><rect x="10.5" y="5.5" width="5" height="2.5" fill="#6a7788"/></svg></div>
<div class="wb cl" style="left:709px;top:75px;width:28px;height:15px"><svg width="28" height="15"><path d="M10 3.5l7 7M17 3.5l-7 7" stroke="#3a1810" stroke-width="3.6" stroke-linecap="round"/><path d="M10 3.5l7 7M17 3.5l-7 7" stroke="#fff" stroke-width="1.8" stroke-linecap="round"/></svg></div>

<div class="a" style="left:13px;top:92px;width:725px;height:342px;background:#ececec;overflow:hidden">
 <div class="a" style="left:-13px;top:-92px;width:760px;height:440px">
  <div class="a" style="left:0;top:0;width:723px;height:420px;overflow:hidden">
  <!-- header -->
  <div class="r" style="top:92px;height:15px;background:linear-gradient(#f6f6f6,#eeeeee)">
   <svg class="a" style="left:14px;top:1px" width="15" height="14" viewBox="0 0 15 14"><rect x="1" y="0.5" width="12" height="13" fill="#f6eeee"/><g fill="#b0707a"><path d="M7 1l2.2 2.2L7 5.4 4.8 3.2z"/><path d="M3.4 4.6l2.2 2.2-2.2 2.2-2.2-2.2z"/><path d="M10.6 4.6l2.2 2.2-2.2 2.2-2.2-2.2z"/><path d="M7 8.2l2.2 2.2L7 12.6 4.8 10.4z"/></g><path d="M14 1v12" stroke="#c8b0b0" stroke-dasharray="1 1"/></svg>
   <div class="h" style="left:29px;width:77px;text-align:right;border-left:none;padding-right:2px">ID</div>
   <div class="h" style="left:106px;width:44px;letter-spacing:-0.6px;padding-left:1px">Coloring</div>
   <div class="h" style="left:150px;width:110px;background:#f1e100">Block</div>
   <div class="h" style="left:260px;width:110px;background:#f1e100">Precinct</div>
   <div class="h" style="left:370px;width:38px;background:#f1e100">County</div>
   <div class="h" style="left:408px;width:30px">State</div>
   <div class="h" style="left:438px;width:89px">BlockGroup</div>
   <div class="h" style="left:527px;width:80px">Tract</div>
   <div class="h" style="left:607px;width:110px">Block2000</div>
   <div class="h" style="left:717px;width:10px">M</div>
  </div>
  <div class="a" style="left:13px;top:107px;width:711px;height:2px;background:linear-gradient(#2a2a22,#5a5a50)"></div>
<div class="r" style="top:109px"><div class="c" style="left:13px;width:16px;background:#fff"></div><div class="c rt" style="left:29px;width:78px;background:#c0d7bd">9331515</div><div class="c rt" style="left:107px;width:43px;background:#e3e3e3">1</div><div class="c" style="left:150px;width:110px;background:#e8d800">090052611002114</div><div class="c" style="left:260px;width:110px;background:#e8d800">0900505-031</div><div class="c" style="left:370px;width:38px;background:#e8d800">09005</div><div class="c" style="left:408px;width:30px;background:#e3e3e3">09</div><div class="c" style="left:438px;width:89px;background:#e3e3e3">090052611002</div><div class="c" style="left:527px;width:80px;background:#e3e3e3">09005261100</div><div class="c" style="left:607px;width:110px;background:#e3e3e3">090052611002049</div><div class="c" style="left:717px;width:43px;background:#e3e3e3">0</div></div>
<div class="r" style="top:125px"><div class="c" style="left:13px;width:16px;background:#fff"></div><div class="c rt" style="left:29px;width:78px;background:#c0d7bd">9331536</div><div class="c rt" style="left:107px;width:43px;background:#ffffff">3</div><div class="c" style="left:150px;width:110px;background:#ffec00">090052611002085</div><div class="c" style="left:260px;width:110px;background:#ffec00">0900505-031</div><div class="c" style="left:370px;width:38px;background:#ffec00">09005</div><div class="c" style="left:408px;width:30px;background:#ffffff">09</div><div class="c" style="left:438px;width:89px;background:#ffffff">090052611002</div><div class="c" style="left:527px;width:80px;background:#ffffff">09005261100</div><div class="c" style="left:607px;width:110px;background:#ffffff">090052611002038</div><div class="c" style="left:717px;width:43px;background:#ffffff">0</div></div>
<div class="r" style="top:141px"><div class="c" style="left:13px;width:16px;background:#fff"></div><div class="c rt" style="left:29px;width:78px;background:#c0d7bd">9331553</div><div class="c rt" style="left:107px;width:43px;background:#e3e3e3">2</div><div class="c" style="left:150px;width:110px;background:#e8d800">090052611002111</div><div class="c" style="left:260px;width:110px;background:#e8d800">0900505-031</div><div class="c" style="left:370px;width:38px;background:#e8d800">09005</div><div class="c" style="left:408px;width:30px;background:#e3e3e3">09</div><div class="c" style="left:438px;width:89px;background:#e3e3e3">090052611002</div><div class="c" style="left:527px;width:80px;background:#e3e3e3">09005261100</div><div class="c" style="left:607px;width:110px;background:#e3e3e3">090052611002047</div><div class="c" style="left:717px;width:43px;background:#e3e3e3">0</div></div>
<div class="r" style="top:157px"><div class="c" style="left:13px;width:16px;background:#fff"></div><div class="c rt" style="left:29px;width:78px;background:#c0d7bd">9331572</div><div class="c rt" style="left:107px;width:43px;background:#ffffff">0</div><div class="c" style="left:150px;width:110px;background:#ffec00">090052611004001</div><div class="c" style="left:260px;width:110px;background:#ffec00">0900505-031</div><div class="c" style="left:370px;width:38px;background:#ffec00">09005</div><div class="c" style="left:408px;width:30px;background:#ffffff">09</div><div class="c" style="left:438px;width:89px;background:#ffffff">090052611004</div><div class="c" style="left:527px;width:80px;background:#ffffff">09005261100</div><div class="c" style="left:607px;width:110px;background:#ffffff">090052611004001</div><div class="c" style="left:717px;width:43px;background:#ffffff">0</div></div>
<div class="r" style="top:173px"><div class="c" style="left:13px;width:16px;background:#fff"></div><div class="c rt" style="left:29px;width:78px;background:#c0d7bd">9331587</div><div class="c rt" style="left:107px;width:43px;background:#e3e3e3">3</div><div class="c" style="left:150px;width:110px;background:#e8d800">090052611002116</div><div class="c" style="left:260px;width:110px;background:#e8d800">0900505-031</div><div class="c" style="left:370px;width:38px;background:#e8d800">09005</div><div class="c" style="left:408px;width:30px;background:#e3e3e3">09</div><div class="c" style="left:438px;width:89px;background:#e3e3e3">090052611002</div><div class="c" style="left:527px;width:80px;background:#e3e3e3">09005261100</div><div class="c" style="left:607px;width:110px;background:#e3e3e3">090052611002048</div><div class="c" style="left:717px;width:43px;background:#e3e3e3">0</div></div>
<div class="r" style="top:189px"><div class="c" style="left:13px;width:16px;background:#fff"></div><div class="c rt" style="left:29px;width:78px;background:#c0d7bd">9331606</div><div class="c rt" style="left:107px;width:43px;background:#ffffff">0</div><div class="c" style="left:150px;width:110px;background:#ffec00">090054256001045</div><div class="c" style="left:260px;width:110px;background:#ffec00">0900505-005</div><div class="c" style="left:370px;width:38px;background:#ffec00">09005</div><div class="c" style="left:408px;width:30px;background:#ffffff">09</div><div class="c" style="left:438px;width:89px;background:#ffffff">090054256001</div><div class="c" style="left:527px;width:80px;background:#ffffff">09005425600</div><div class="c" style="left:607px;width:110px;background:#ffffff">090052622001020</div><div class="c" style="left:717px;width:43px;background:#ffffff">0</div></div>
<div class="r" style="top:205px"><div class="c" style="left:13px;width:16px;background:#fff"></div><div class="c rt" style="left:29px;width:78px;background:#c0d7bd">9331626</div><div class="c rt" style="left:107px;width:43px;background:#e3e3e3">4</div><div class="c" style="left:150px;width:110px;background:#e8d800">090052611002115</div><div class="c" style="left:260px;width:110px;background:#e8d800">0900505-031</div><div class="c" style="left:370px;width:38px;background:#e8d800">09005</div><div class="c" style="left:408px;width:30px;background:#e3e3e3">09</div><div class="c" style="left:438px;width:89px;background:#e3e3e3">090052611002</div><div class="c" style="left:527px;width:80px;background:#e3e3e3">09005261100</div><div class="c" style="left:607px;width:110px;background:#e3e3e3">090052611002048</div><div class="c" style="left:717px;width:43px;background:#e3e3e3">0</div></div>
<div class="r" style="top:221px"><div class="c" style="left:13px;width:16px;background:#fff"></div><div class="c rt" style="left:29px;width:78px;background:#c0d7bd">9331643</div><div class="c rt" style="left:107px;width:43px;background:#ffffff">1</div><div class="c" style="left:150px;width:110px;background:#ffec00">090052611002083</div><div class="c" style="left:260px;width:110px;background:#ffec00">0900505-031</div><div class="c" style="left:370px;width:38px;background:#ffec00">09005</div><div class="c" style="left:408px;width:30px;background:#ffffff">09</div><div class="c" style="left:438px;width:89px;background:#ffffff">090052611002</div><div class="c" style="left:527px;width:80px;background:#ffffff">09005261100</div><div class="c" style="left:607px;width:110px;background:#ffffff">090052611002046</div><div class="c" style="left:717px;width:43px;background:#ffffff">0</div></div>
<div class="r" style="top:237px"><div class="c" style="left:13px;width:16px;background:#fff"></div><div class="c rt" style="left:29px;width:78px;background:#c0d7bd">9331663</div><div class="c rt" style="left:107px;width:43px;background:#e3e3e3">0</div><div class="c" style="left:150px;width:110px;background:#e8d800">090052611002086</div><div class="c" style="left:260px;width:110px;background:#e8d800">0900505-031</div><div class="c" style="left:370px;width:38px;background:#e8d800">09005</div><div class="c" style="left:408px;width:30px;background:#e3e3e3">09</div><div class="c" style="left:438px;width:89px;background:#e3e3e3">090052611002</div><div class="c" style="left:527px;width:80px;background:#e3e3e3">09005261100</div><div class="c" style="left:607px;width:110px;background:#e3e3e3">090052611002038</div><div class="c" style="left:717px;width:43px;background:#e3e3e3">0</div></div>
<div class="r" style="top:253px"><div class="c" style="left:13px;width:16px;background:#fff"></div><div class="c rt" style="left:29px;width:78px;background:#c0d7bd">9331679</div><div class="c rt" style="left:107px;width:43px;background:#ffffff">2</div><div class="c" style="left:150px;width:110px;background:#ffec00">090052611002084</div><div class="c" style="left:260px;width:110px;background:#ffec00">0900505-031</div><div class="c" style="left:370px;width:38px;background:#ffec00">09005</div><div class="c" style="left:408px;width:30px;background:#ffffff">09</div><div class="c" style="left:438px;width:89px;background:#ffffff">090052611002</div><div class="c" style="left:527px;width:80px;background:#ffffff">09005261100</div><div class="c" style="left:607px;width:110px;background:#ffffff">090052611002038</div><div class="c" style="left:717px;width:43px;background:#ffffff">0</div></div>
<div class="r" style="top:269px"><div class="c" style="left:13px;width:16px;background:#fff"></div><div class="c rt" style="left:29px;width:78px;background:#c0d7bd">9331706</div><div class="c rt" style="left:107px;width:43px;background:#e3e3e3">3</div><div class="c" style="left:150px;width:110px;background:#e8d800">090052611002082</div><div class="c" style="left:260px;width:110px;background:#e8d800">0900505-031</div><div class="c" style="left:370px;width:38px;background:#e8d800">09005</div><div class="c" style="left:408px;width:30px;background:#e3e3e3">09</div><div class="c" style="left:438px;width:89px;background:#e3e3e3">090052611002</div><div class="c" style="left:527px;width:80px;background:#e3e3e3">09005261100</div><div class="c" style="left:607px;width:110px;background:#e3e3e3">090052611002045</div><div class="c" style="left:717px;width:43px;background:#e3e3e3">0</div></div>
<div class="r" style="top:285px"><div class="c" style="left:13px;width:16px;background:#fff"></div><div class="c rt" style="left:29px;width:78px;background:#c0d7bd">9331722</div><div class="c rt" style="left:107px;width:43px;background:#ffffff">1</div><div class="c" style="left:150px;width:110px;background:#ffec00">090052611002064</div><div class="c" style="left:260px;width:110px;background:#ffec00">0900505-031</div><div class="c" style="left:370px;width:38px;background:#ffec00">09005</div><div class="c" style="left:408px;width:30px;background:#ffffff">09</div><div class="c" style="left:438px;width:89px;background:#ffffff">090052611002</div><div class="c" style="left:527px;width:80px;background:#ffffff">09005261100</div><div class="c" style="left:607px;width:110px;background:#ffffff">090052611002038</div><div class="c" style="left:717px;width:43px;background:#ffffff">0</div></div>
<div class="r" style="top:301px"><div class="c" style="left:13px;width:16px;background:#fff"></div><div class="c rt" style="left:29px;width:78px;background:#c0d7bd">9331768</div><div class="c rt" style="left:107px;width:43px;background:#e3e3e3">3</div><div class="c" style="left:150px;width:110px;background:#e8d800">090052611002078</div><div class="c" style="left:260px;width:110px;background:#e8d800">0900505-031</div><div class="c" style="left:370px;width:38px;background:#e8d800">09005</div><div class="c" style="left:408px;width:30px;background:#e3e3e3">09</div><div class="c" style="left:438px;width:89px;background:#e3e3e3">090052611002</div><div class="c" style="left:527px;width:80px;background:#e3e3e3">09005261100</div><div class="c" style="left:607px;width:110px;background:#e3e3e3">090052611002043</div><div class="c" style="left:717px;width:43px;background:#e3e3e3">0</div></div>
<div class="r" style="top:317px"><div class="c" style="left:13px;width:16px;background:#fff"></div><div class="c rt" style="left:29px;width:78px;background:#c0d7bd">9331784</div><div class="c rt" style="left:107px;width:43px;background:#ffffff">0</div><div class="c" style="left:150px;width:110px;background:#ffec00">090052611002072</div><div class="c" style="left:260px;width:110px;background:#ffec00">0900505-031</div><div class="c" style="left:370px;width:38px;background:#ffec00">09005</div><div class="c" style="left:408px;width:30px;background:#ffffff">09</div><div class="c" style="left:438px;width:89px;background:#ffffff">090052611002</div><div class="c" style="left:527px;width:80px;background:#ffffff">09005261100</div><div class="c" style="left:607px;width:110px;background:#ffffff">090052611002040</div><div class="c" style="left:717px;width:43px;background:#ffffff">0</div></div>
<div class="r" style="top:333px"><div class="c" style="left:13px;width:16px;background:#fff"></div><div class="c rt" style="left:29px;width:78px;background:#c0d7bd">9331799</div><div class="c rt" style="left:107px;width:43px;background:#e3e3e3">0</div><div class="c" style="left:150px;width:110px;background:#e8d800">090052611002081</div><div class="c" style="left:260px;width:110px;background:#e8d800">0900505-031</div><div class="c" style="left:370px;width:38px;background:#e8d800">09005</div><div class="c" style="left:408px;width:30px;background:#e3e3e3">09</div><div class="c" style="left:438px;width:89px;background:#e3e3e3">090052611002</div><div class="c" style="left:527px;width:80px;background:#e3e3e3">09005261100</div><div class="c" style="left:607px;width:110px;background:#e3e3e3">090052611002045</div><div class="c" style="left:717px;width:43px;background:#e3e3e3">0</div></div>
<div class="r" style="top:349px"><div class="c" style="left:13px;width:16px;background:#fff"></div><div class="c rt" style="left:29px;width:78px;background:#c0d7bd">9331824</div><div class="c rt" style="left:107px;width:43px;background:#ffffff">3</div><div class="c" style="left:150px;width:110px;background:#ffec00">090052611002071</div><div class="c" style="left:260px;width:110px;background:#ffec00">0900505-031</div><div class="c" style="left:370px;width:38px;background:#ffec00">09005</div><div class="c" style="left:408px;width:30px;background:#ffffff">09</div><div class="c" style="left:438px;width:89px;background:#ffffff">090052611002</div><div class="c" style="left:527px;width:80px;background:#ffffff">09005261100</div><div class="c" style="left:607px;width:110px;background:#ffffff">090052611002041</div><div class="c" style="left:717px;width:43px;background:#ffffff">0</div></div>
<div class="r" style="top:365px"><div class="c" style="left:13px;width:16px;background:#fff"></div><div class="c rt" style="left:29px;width:78px;background:#c0d7bd">9331844</div><div class="c rt" style="left:107px;width:43px;background:#e3e3e3">1</div><div class="c" style="left:150px;width:110px;background:#e8d800">090052611002077</div><div class="c" style="left:260px;width:110px;background:#e8d800">0900505-031</div><div class="c" style="left:370px;width:38px;background:#e8d800">09005</div><div class="c" style="left:408px;width:30px;background:#e3e3e3">09</div><div class="c" style="left:438px;width:89px;background:#e3e3e3">090052611002</div><div class="c" style="left:527px;width:80px;background:#e3e3e3">09005261100</div><div class="c" style="left:607px;width:110px;background:#e3e3e3">090052611002042</div><div class="c" style="left:717px;width:43px;background:#e3e3e3">0</div></div>
<div class="r" style="top:381px"><div class="c" style="left:13px;width:16px;background:#fff"></div><div class="c rt" style="left:29px;width:78px;background:#c0d7bd">9331864</div><div class="c rt" style="left:107px;width:43px;background:#ffffff">1</div><div class="c" style="left:150px;width:110px;background:#ffec00">090052611002079</div><div class="c" style="left:260px;width:110px;background:#ffec00">0900505-031</div><div class="c" style="left:370px;width:38px;background:#ffec00">09005</div><div class="c" style="left:408px;width:30px;background:#ffffff">09</div><div class="c" style="left:438px;width:89px;background:#ffffff">090052611002</div><div class="c" style="left:527px;width:80px;background:#ffffff">09005261100</div><div class="c" style="left:607px;width:110px;background:#ffffff">090052611002042</div><div class="c" style="left:717px;width:43px;background:#ffffff">0</div></div>
<div class="r" style="top:397px"><div class="c" style="left:13px;width:16px;background:#fff"></div><div class="c rt" style="left:29px;width:78px;background:#c0d7bd">9331879</div><div class="c rt" style="left:107px;width:43px;background:#e3e3e3">1</div><div class="c" style="left:150px;width:110px;background:#e8d800">090054256001046</div><div class="c" style="left:260px;width:110px;background:#e8d800">0900505-005</div><div class="c" style="left:370px;width:38px;background:#e8d800">09005</div><div class="c" style="left:408px;width:30px;background:#e3e3e3">09</div><div class="c" style="left:438px;width:89px;background:#e3e3e3">090054256001</div><div class="c" style="left:527px;width:80px;background:#e3e3e3">09005425600</div><div class="c" style="left:607px;width:110px;background:#e3e3e3">090052622001029</div><div class="c" style="left:717px;width:43px;background:#e3e3e3">0</div></div>
<div class="r" style="top:413px"><div class="c" style="left:13px;width:16px;background:#fff"></div><div class="c rt" style="left:29px;width:78px;background:#c0d7bd">9331898</div><div class="c rt" style="left:107px;width:43px;background:#ffffff">3</div><div class="c" style="left:150px;width:110px;background:#ffec00">090054256001048</div><div class="c" style="left:260px;width:110px;background:#ffec00">0900505-005</div><div class="c" style="left:370px;width:38px;background:#ffec00">09005</div><div class="c" style="left:408px;width:30px;background:#ffffff">09</div><div class="c" style="left:438px;width:89px;background:#ffffff">090054256001</div><div class="c" style="left:527px;width:80px;background:#ffffff">09005425600</div><div class="c" style="left:607px;width:110px;background:#ffffff">090052622001021</div><div class="c" style="left:717px;width:43px;background:#ffffff">0</div></div>
  </div>
  <!-- vertical scrollbar -->
  <div class="a" style="left:723px;top:92px;width:15px;height:328px;background:#efefef"></div>
  <svg class="a" style="left:728px;top:98px" width="7" height="5"><path d="M0 4L3.5 0.5 7 4z" fill="#505050"/></svg>
  <div class="a" style="left:724px;top:109px;width:13px;height:13px;border:1px solid #a8a8a8;border-radius:2px;background:linear-gradient(90deg,#f4f4f4,#e4e4e4 50%,#d6d6d6)"></div>
  <svg class="a" style="left:728px;top:409px" width="7" height="5"><path d="M0 0.5L3.5 4 7 0.5z" fill="#505050"/></svg>
  <!-- horizontal scrollbar -->
  <div class="a" style="left:13px;top:420px;width:725px;height:14px;background:#ececec"></div>
  <svg class="a" style="left:18px;top:423px" width="5" height="8"><path d="M5 0L1 4 5 8z" fill="#444"/></svg>
  <div class="a" style="left:29px;top:420px;width:14px;height:13px;border:1px solid #a8a8a8;border-radius:2px;background:linear-gradient(#f6f6f6,#e6e6e6 50%,#d4d4d4)"></div>
  <svg class="a" style="left:713px;top:423px" width="5" height="8"><path d="M0 0L4 4 0 8z" fill="#555"/></svg>
  <svg class="a" style="left:728px;top:424px" width="9" height="9"><g fill="#b0b0b0"><rect x="6" y="0" width="2" height="2"/><rect x="3" y="3" width="2" height="2"/><rect x="6" y="3" width="2" height="2"/><rect x="0" y="6" width="2" height="2"/><rect x="3" y="6" width="2" height="2"/><rect x="6" y="6" width="2" height="2"/></g></svg>
 </div>
</div>

<div id="status" class="a"></div>
<div class="a" style="left:6px;top:624px;font-size:11px;letter-spacing:-0.38px;color:#1e1e1e;white-space:nowrap">Dataview: Records 1 - 20 of 67578</div>
<div class="a" style="left:291px;top:622px;width:15px;height:14px;background:linear-gradient(#a8a8a8,#929292);border:1px solid #7a7a7a"></div>
<svg class="a" style="left:293px;top:625px" width="11" height="8"><path d="M1 0l3.5 4L1 8M5 0l3.5 4L5 8" fill="none" stroke="#f4f4f4" stroke-width="1.2"/></svg>
<div class="a" style="left:309px;top:622px;width:15px;height:14px;background:linear-gradient(#a8a8a8,#929292);border:1px solid #7a7a7a"></div>
<svg class="a" style="left:311px;top:624px" width="11" height="10"><path d="M2 1l7 8M9 1l-7 8" fill="none" stroke="#fff" stroke-width="2.4"/></svg>
<div class="a" style="left:607px;top:621px;width:1px;height:15px;background:#dcdcdc"></div>
<svg class="a" style="left:1124px;top:626px" width="9" height="9"><g fill="#a8a8a8"><rect x="6" y="0" width="2" height="2"/><rect x="3" y="3" width="2" height="2"/><rect x="6" y="3" width="2" height="2"/><rect x="0" y="6" width="2" height="2"/><rect x="3" y="6" width="2" height="2"/><rect x="6" y="6" width="2" height="2"/></g></svg>
<svg class="a" style="left:185px;top:240px" width="14" height="18" viewBox="0 0 14 18"><path d="M1.5 1v14.5l3.5-3.5 2.5 5 2-1-2.5-5h4.8z" fill="rgba(255,240,0,0.5)" stroke="#111" stroke-width="1.1" stroke-linejoin="round"/></svg>
</body></html>
